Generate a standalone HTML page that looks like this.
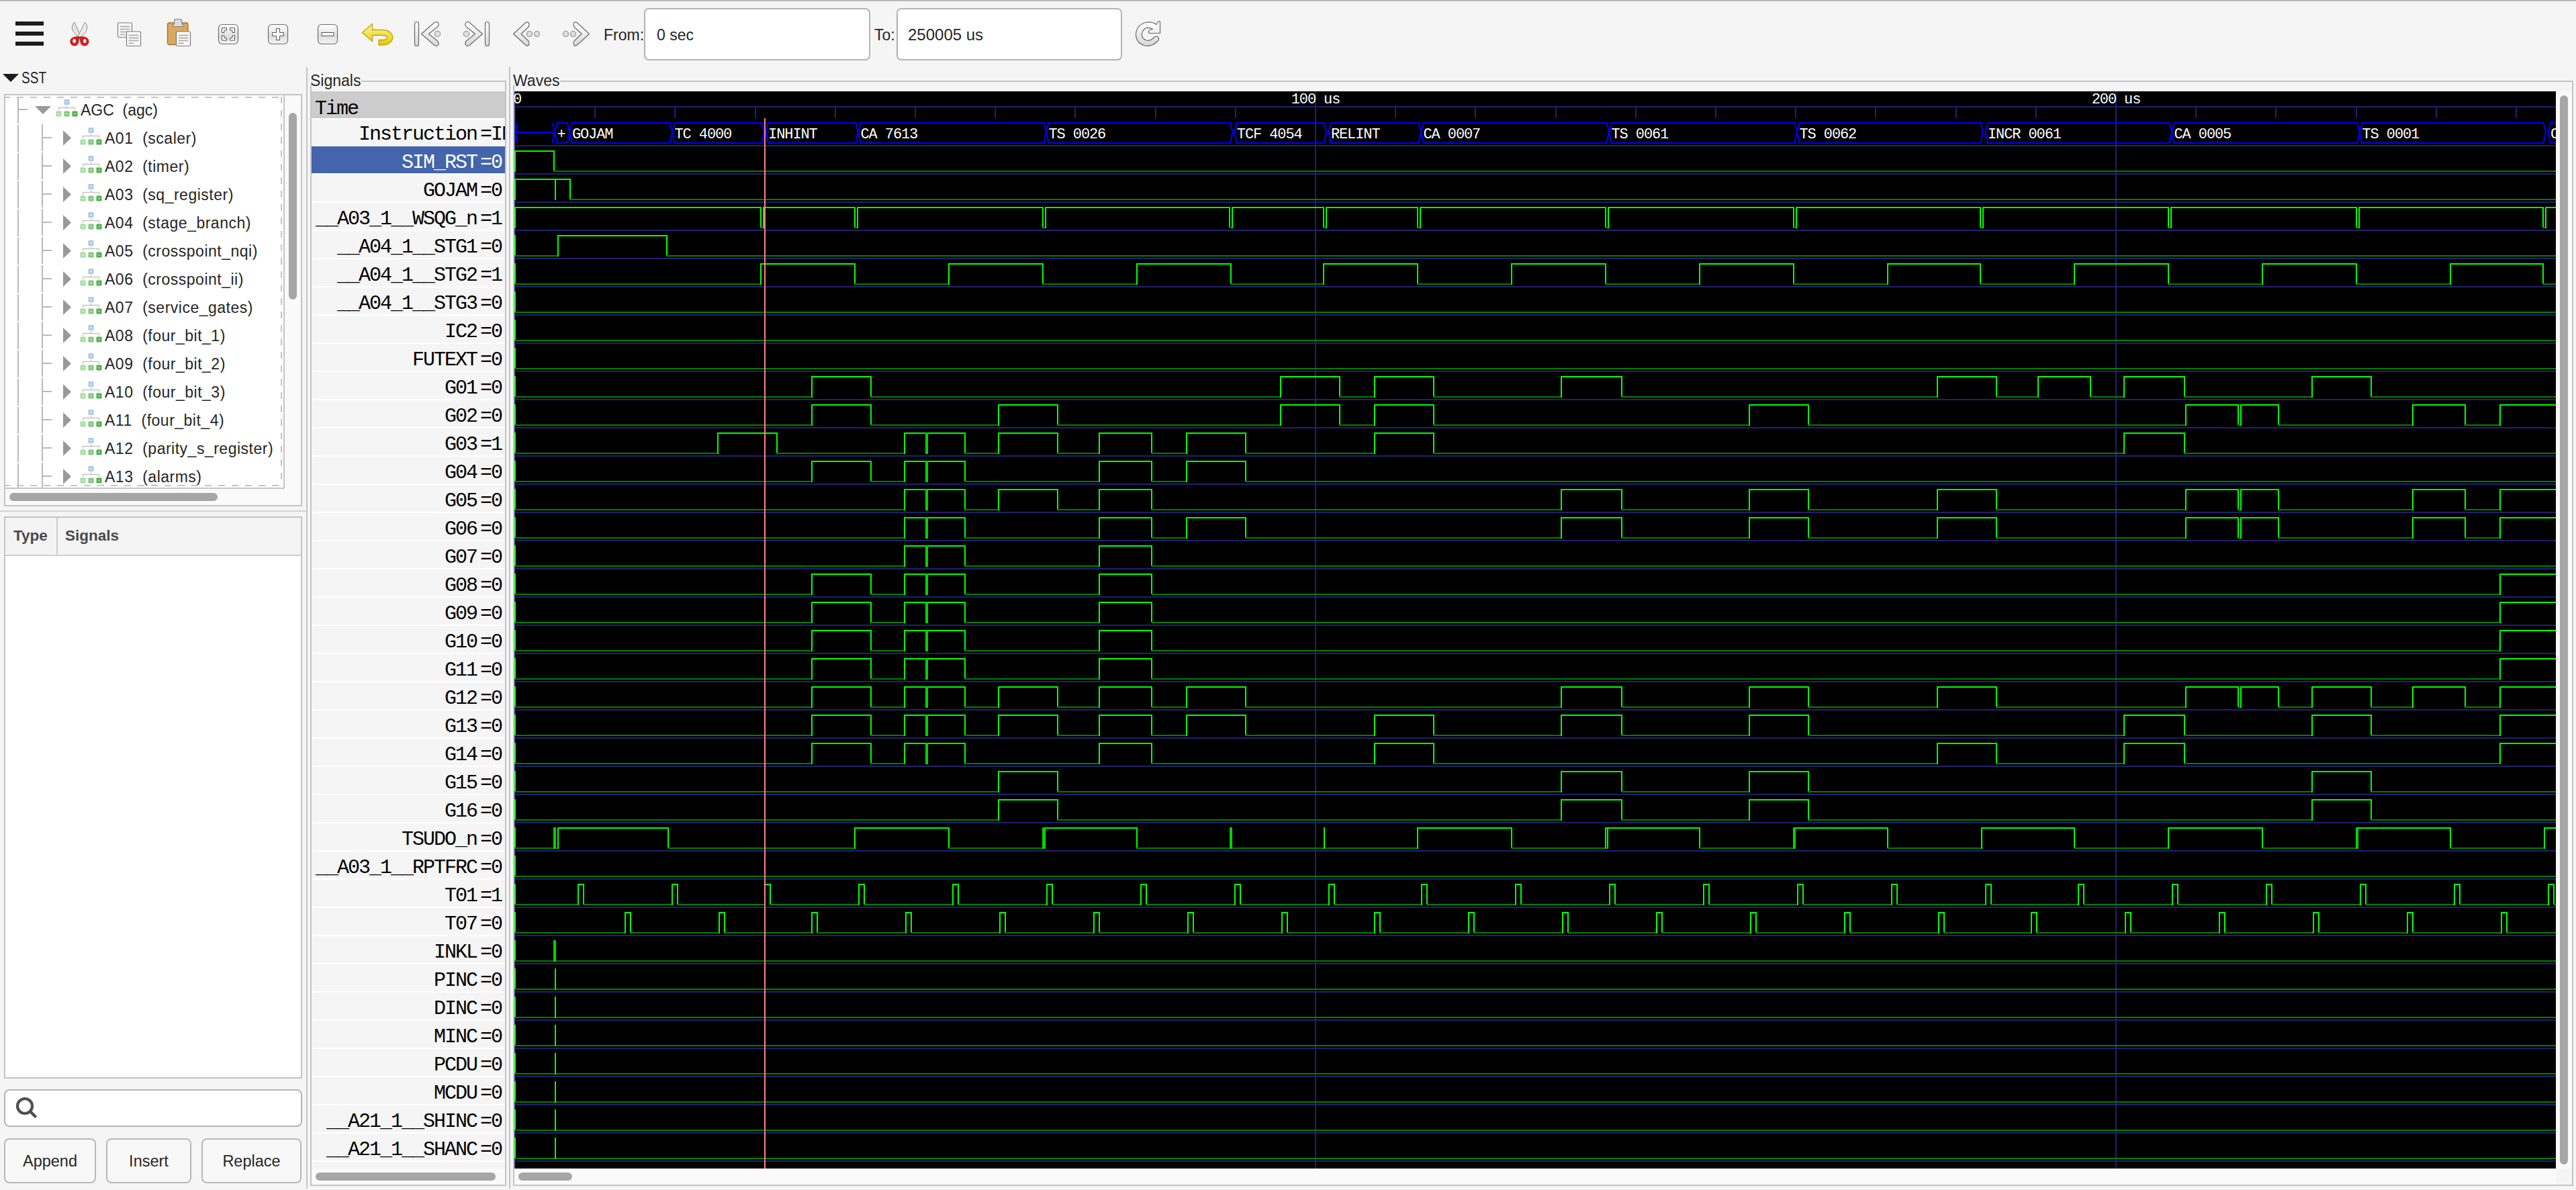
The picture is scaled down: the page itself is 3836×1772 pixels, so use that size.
<!DOCTYPE html><html><head><meta charset="utf-8"><title>GTKWave</title><style>html,body{margin:0;padding:0;width:3836px;height:1772px;overflow:hidden;background:#f5f5f5;}body{position:relative;font-family:"Liberation Sans", sans-serif;}</style></head><body><svg width="3836" height="1772" viewBox="0 0 3836 1772" style="position:absolute;left:0;top:0;display:block">
<rect x="0" y="0" width="3836" height="1772" fill="#f5f5f5"/>
<rect x="0" y="0" width="3836" height="2" fill="#bababa"/>
<rect x="0" y="2" width="3836" height="1" fill="#f8f8f8"/>
<g id="toolbar">
<rect x="23" y="32" width="42" height="6" fill="#1c1c1c"/>
<rect x="23" y="47" width="42" height="6" fill="#1c1c1c"/>
<rect x="23" y="62" width="42" height="6" fill="#1c1c1c"/>
<g><path d="M110.5,33 C106.5,38.5 106.5,43.5 109.5,47.5 L117.5,56.5 L120.5,53.5 Z" fill="#e4e4e2" stroke="#8a8a8a" stroke-width="1" stroke-linejoin="round"/><path d="M126.5,33 C130.5,38.5 130.5,43.5 127.5,47.5 L119.5,56.5 L116.5,53.5 Z" fill="#ececea" stroke="#8a8a8a" stroke-width="1" stroke-linejoin="round"/><path d="M118.3,55 C114,54.2 104.8,54.8 104.8,61.5 C104.8,66 107.5,68 111,68 C114.5,68 117,65.5 117,61 Z M110.6,57.5 A2.9,3.5 0 1,0 110.6,64.5 A2.9,3.5 0 1,0 110.6,57.5 Z" fill="#e21a20" fill-rule="evenodd" stroke="#a80a10" stroke-width="0.8"/><path d="M118.5,55 C122.8,54.2 132,54.8 132,61.5 C132,66 129.3,68 125.8,68 C122.3,68 119.8,65.5 119.8,61 Z M126.2,57.5 A2.9,3.5 0 1,0 126.2,64.5 A2.9,3.5 0 1,0 126.2,57.5 Z" fill="#e21a20" fill-rule="evenodd" stroke="#a80a10" stroke-width="0.8"/></g>
<g><rect x="175.5" y="34" width="21" height="21.5" rx="1.5" fill="#fbfbfb" stroke="#7a7a7a" stroke-width="1.2"/><rect x="178.5" y="38.5" width="15.0" height="2" fill="#b4b4b4"/><rect x="178.5" y="42.5" width="15.0" height="2" fill="#b4b4b4"/><rect x="178.5" y="46.5" width="15.0" height="2" fill="#b4b4b4"/><rect x="178.5" y="50.5" width="8.2" height="2" fill="#b4b4b4"/><rect x="188.5" y="47" width="21" height="21.5" rx="1.5" fill="#fbfbfb" stroke="#7a7a7a" stroke-width="1.2"/><rect x="191.5" y="51.5" width="15.0" height="2" fill="#b4b4b4"/><rect x="191.5" y="55.5" width="15.0" height="2" fill="#b4b4b4"/><rect x="191.5" y="59.5" width="15.0" height="2" fill="#b4b4b4"/><rect x="191.5" y="63.5" width="8.2" height="2" fill="#b4b4b4"/></g>
<g><rect x="249.5" y="34" width="30.5" height="32.5" rx="2.5" fill="#d9a95e" stroke="#a8722a" stroke-width="1.3"/><path d="M259.5,36 L259.5,31 Q259.5,28.5 262,28.5 L268.5,28.5 Q271,28.5 271,31 L271,36 L273.5,37.5 Q274.5,39.5 272,39.5 L258.5,39.5 Q256,39.5 257,37.5 Z" fill="#dcdcdc" stroke="#7d7d7d" stroke-width="1.1" stroke-linejoin="round"/><rect x="262.5" y="47" width="21" height="21.5" rx="1.5" fill="#fbfbfb" stroke="#7a7a7a" stroke-width="1.2"/><rect x="265.5" y="51.5" width="15.0" height="2" fill="#b4b4b4"/><rect x="265.5" y="55.5" width="15.0" height="2" fill="#b4b4b4"/><rect x="265.5" y="59.5" width="15.0" height="2" fill="#b4b4b4"/><rect x="265.5" y="63.5" width="8.2" height="2" fill="#b4b4b4"/></g>
<defs><linearGradient id="zg" x1="0" y1="0" x2="0" y2="1"><stop offset="0" stop-color="#ffffff"/><stop offset="0.6" stop-color="#dedede"/><stop offset="1" stop-color="#f4f4f4"/></linearGradient><linearGradient id="ug" x1="0" y1="0" x2="0" y2="1"><stop offset="0" stop-color="#fff5a0"/><stop offset="1" stop-color="#e8c800"/></linearGradient><linearGradient id="gg" x1="0" y1="0" x2="0" y2="1"><stop offset="0" stop-color="#ffffff"/><stop offset="1" stop-color="#d8d8d8"/></linearGradient></defs>
<rect x="325.5" y="36.5" width="29" height="29" rx="5.5" fill="url(#zg)" stroke="#6e6e6e" stroke-width="1.2"/>
<path d="M330.5,48.5 V41.5 H337.5 V45 H334 V48.5 Z M349.5,48.5 V41.5 H342.5 V45 H346 V48.5 Z M330.5,53 V60 H337.5 V56.5 H334 V53 Z M349.5,53 V60 H342.5 V56.5 H346 V53 Z" fill="#fff" stroke="#555" stroke-width="1"/>
<rect x="399.5" y="36.5" width="29" height="29" rx="5.5" fill="url(#zg)" stroke="#6e6e6e" stroke-width="1.2"/>
<path d="M411.5,42.5 H416.5 V48.5 H422.5 V53.5 H416.5 V59.5 H411.5 V53.5 H405.5 V48.5 H411.5 Z" fill="#fff" stroke="#555" stroke-width="1"/>
<rect x="473.5" y="36.5" width="29" height="29" rx="5.5" fill="url(#zg)" stroke="#6e6e6e" stroke-width="1.2"/>
<rect x="479" y="48.5" width="18" height="5" fill="#fff" stroke="#555" stroke-width="1"/>
<path d="M539.5,48.5 L554.5,35.5 L554.5,44.5 L569,44.5 C590,44.5 590,67 569,67 L564,67 L564,59.5 L569,59.5 C579,59.5 579,52.5 569,52.5 L554.5,52.5 L554.5,61.5 Z" fill="url(#ug)" stroke="#c4a200" stroke-width="1.3" stroke-linejoin="round"/>
<rect x="617.5" y="32.5" width="6" height="36" rx="3" fill="url(#gg)" stroke="#6a6a6a" stroke-width="1.2"/>
<path d="M627.5,50.5 L647,33.5 Q651,31 653,35 Q654,38 651,40.5 L638.5,50.5 L651,60.5 Q654,63 653,66 Q651,70 647,67.5 Z" fill="url(#gg)" stroke="#6a6a6a" stroke-width="1.2" stroke-linejoin="round"/>
<circle cx="651.5" cy="50.5" r="4.2" fill="#dedede" stroke="#8c8c8c" stroke-width="1.1"/>
<rect x="722.5" y="32.5" width="6" height="36" rx="3" fill="url(#gg)" stroke="#6a6a6a" stroke-width="1.2"/>
<path d="M718.5,50.5 L699,33.5 Q695,31 693,35 Q692,38 695,40.5 L707.5,50.5 L695,60.5 Q692,63 693,66 Q695,70 699,67.5 Z" fill="url(#gg)" stroke="#6a6a6a" stroke-width="1.2" stroke-linejoin="round"/>
<circle cx="694.5" cy="50.5" r="4.2" fill="#dedede" stroke="#8c8c8c" stroke-width="1.1"/>
<path d="M764.5,50.5 L782.5,34 Q786.5,31 788,35.5 Q788.5,38.5 786,41 L776,50.5 L786,60 Q788.5,62.5 788,65.5 Q786.5,70 782.5,67 Z" fill="url(#gg)" stroke="#6a6a6a" stroke-width="1.2" stroke-linejoin="round"/>
<circle cx="788.5" cy="50.5" r="4" fill="#dedede" stroke="#8c8c8c" stroke-width="1.1"/>
<circle cx="799.5" cy="50.5" r="4" fill="#dedede" stroke="#8c8c8c" stroke-width="1.1"/>
<path d="M877.5,50.5 L859.5,34 Q855.5,31 854,35.5 Q853.5,38.5 856,41 L866,50.5 L856,60 Q853.5,62.5 854,65.5 Q855.5,70 859.5,67 Z" fill="url(#gg)" stroke="#6a6a6a" stroke-width="1.2" stroke-linejoin="round"/>
<circle cx="842.5" cy="50.5" r="4" fill="#dedede" stroke="#8c8c8c" stroke-width="1.1"/>
<circle cx="853.5" cy="50.5" r="4" fill="#dedede" stroke="#8c8c8c" stroke-width="1.1"/>
<path d="M1727.5,32.5 L1727.5,49.5 L1711,49.5 Q1709,47 1712,45 L1716.5,43 Q1706,38.5 1702,46 Q1697,56 1707,60 Q1713,62 1719,55 Q1722,53 1725,55.5 Q1726.5,58 1724.5,60.5 Q1716,70 1705,68 Q1691,64 1691.5,50 Q1693,37 1706,33.5 Q1715,31.5 1722,36.5 L1724,33 Q1725.5,31 1727.5,32.5 Z" fill="url(#gg)" stroke="#6a6a6a" stroke-width="1.2" stroke-linejoin="round"/>
</g>
<text x="899" y="60" font-family='"Liberation Sans", sans-serif' font-size="23" fill="#262626">From:</text>
<rect x="960" y="13" width="335" height="76" rx="6" fill="#ffffff" stroke="#b3b3b3" stroke-width="2"/>
<text x="978" y="60" font-family='"Liberation Sans", sans-serif' font-size="23" fill="#262626">0 sec</text>
<text x="1302" y="60" font-family='"Liberation Sans", sans-serif' font-size="23" fill="#262626">To:</text>
<rect x="1336" y="13" width="334" height="76" rx="6" fill="#ffffff" stroke="#b3b3b3" stroke-width="2"/>
<text x="1352" y="60" font-family='"Liberation Sans", sans-serif' font-size="24" fill="#262626">250005 us</text>
<path d="M4,110 L28,110 L16,122 Z" fill="#1c1c1c"/>
<text x="32" y="124" font-family='"Liberation Sans", sans-serif' font-size="23" fill="#262626" textLength="37" lengthAdjust="spacingAndGlyphs">SST</text>
<rect x="6" y="140" width="444" height="614" fill="#c4c4c4"/>
<rect x="8" y="142" width="440" height="610" fill="#fafafa"/>
<rect x="8" y="142" width="414" height="584" fill="#ffffff"/>
<rect x="422" y="142" width="2" height="586" fill="#c4c4c4"/>
<rect x="8" y="726" width="416" height="2" fill="#c4c4c4"/>
<rect x="26" y="144" width="2" height="40" fill="#b8b8b8"/>
<rect x="26" y="186" width="2" height="40" fill="#b8b8b8"/>
<rect x="26" y="228" width="2" height="40" fill="#b8b8b8"/>
<rect x="26" y="270" width="2" height="40" fill="#b8b8b8"/>
<rect x="26" y="312" width="2" height="40" fill="#b8b8b8"/>
<rect x="26" y="354" width="2" height="40" fill="#b8b8b8"/>
<rect x="26" y="396" width="2" height="40" fill="#b8b8b8"/>
<rect x="26" y="438" width="2" height="40" fill="#b8b8b8"/>
<rect x="26" y="480" width="2" height="40" fill="#b8b8b8"/>
<rect x="26" y="522" width="2" height="40" fill="#b8b8b8"/>
<rect x="26" y="564" width="2" height="40" fill="#b8b8b8"/>
<rect x="26" y="606" width="2" height="40" fill="#b8b8b8"/>
<rect x="26" y="648" width="2" height="40" fill="#b8b8b8"/>
<rect x="26" y="690" width="2" height="40" fill="#b8b8b8"/>
<rect x="27" y="162" width="14" height="2" fill="#b8b8b8"/>
<rect x="62" y="185" width="2" height="40" fill="#b8b8b8"/>
<rect x="63" y="204" width="14" height="2" fill="#b8b8b8"/>
<rect x="62" y="227" width="2" height="40" fill="#b8b8b8"/>
<rect x="63" y="246" width="14" height="2" fill="#b8b8b8"/>
<rect x="62" y="269" width="2" height="40" fill="#b8b8b8"/>
<rect x="63" y="288" width="14" height="2" fill="#b8b8b8"/>
<rect x="62" y="311" width="2" height="40" fill="#b8b8b8"/>
<rect x="63" y="330" width="14" height="2" fill="#b8b8b8"/>
<rect x="62" y="353" width="2" height="40" fill="#b8b8b8"/>
<rect x="63" y="372" width="14" height="2" fill="#b8b8b8"/>
<rect x="62" y="395" width="2" height="40" fill="#b8b8b8"/>
<rect x="63" y="414" width="14" height="2" fill="#b8b8b8"/>
<rect x="62" y="437" width="2" height="40" fill="#b8b8b8"/>
<rect x="63" y="456" width="14" height="2" fill="#b8b8b8"/>
<rect x="62" y="479" width="2" height="40" fill="#b8b8b8"/>
<rect x="63" y="498" width="14" height="2" fill="#b8b8b8"/>
<rect x="62" y="521" width="2" height="40" fill="#b8b8b8"/>
<rect x="63" y="540" width="14" height="2" fill="#b8b8b8"/>
<rect x="62" y="563" width="2" height="40" fill="#b8b8b8"/>
<rect x="63" y="582" width="14" height="2" fill="#b8b8b8"/>
<rect x="62" y="605" width="2" height="40" fill="#b8b8b8"/>
<rect x="63" y="624" width="14" height="2" fill="#b8b8b8"/>
<rect x="62" y="647" width="2" height="40" fill="#b8b8b8"/>
<rect x="63" y="666" width="14" height="2" fill="#b8b8b8"/>
<rect x="62" y="689" width="2" height="40" fill="#b8b8b8"/>
<rect x="63" y="708" width="14" height="2" fill="#b8b8b8"/>
<path d="M52,158 L76,158 L64,170 Z" fill="#999999"/>
<rect x="95.5" y="148" width="8" height="8" fill="#a9c8ee" rx="1"/><rect x="98" y="150.5" width="3" height="3" fill="#d4e2f6"/><path d="M87.5,164.5 V160.5 H111.5 V164.5 M99.5,157 V160.5" fill="none" stroke="#c4c4c4" stroke-width="1.3"/><rect x="83.5" y="165.5" width="8" height="8" fill="#a8dca0" rx="1"/><rect x="86.0" y="168" width="3" height="3" fill="#cdeac8"/><rect x="95.5" y="165.5" width="8" height="8" fill="#7dca78" rx="1"/><rect x="98.0" y="168" width="3" height="3" fill="#a6dca2"/><rect x="107.5" y="165.5" width="8" height="8" fill="#4fb04c" rx="1"/><rect x="110.0" y="168" width="3" height="3" fill="#86cc83"/>
<text x="120" y="172" font-family='"Liberation Sans", sans-serif' font-size="23" fill="#262626" xml:space="preserve">AGC  (agc)</text>
<path d="M94,194 L94,217 L106,205.5 Z" fill="#999999"/>
<rect x="131.5" y="190" width="8" height="8" fill="#a9c8ee" rx="1"/><rect x="134" y="192.5" width="3" height="3" fill="#d4e2f6"/><path d="M123.5,206.5 V202.5 H147.5 V206.5 M135.5,199 V202.5" fill="none" stroke="#c4c4c4" stroke-width="1.3"/><rect x="119.5" y="207.5" width="8" height="8" fill="#a8dca0" rx="1"/><rect x="122.0" y="210" width="3" height="3" fill="#cdeac8"/><rect x="131.5" y="207.5" width="8" height="8" fill="#7dca78" rx="1"/><rect x="134.0" y="210" width="3" height="3" fill="#a6dca2"/><rect x="143.5" y="207.5" width="8" height="8" fill="#4fb04c" rx="1"/><rect x="146.0" y="210" width="3" height="3" fill="#86cc83"/>
<text x="156" y="214" font-family='"Liberation Sans", sans-serif' font-size="23" letter-spacing="0.5" fill="#262626" xml:space="preserve">A01  (scaler)</text>
<path d="M94,236 L94,259 L106,247.5 Z" fill="#999999"/>
<rect x="131.5" y="232" width="8" height="8" fill="#a9c8ee" rx="1"/><rect x="134" y="234.5" width="3" height="3" fill="#d4e2f6"/><path d="M123.5,248.5 V244.5 H147.5 V248.5 M135.5,241 V244.5" fill="none" stroke="#c4c4c4" stroke-width="1.3"/><rect x="119.5" y="249.5" width="8" height="8" fill="#a8dca0" rx="1"/><rect x="122.0" y="252" width="3" height="3" fill="#cdeac8"/><rect x="131.5" y="249.5" width="8" height="8" fill="#7dca78" rx="1"/><rect x="134.0" y="252" width="3" height="3" fill="#a6dca2"/><rect x="143.5" y="249.5" width="8" height="8" fill="#4fb04c" rx="1"/><rect x="146.0" y="252" width="3" height="3" fill="#86cc83"/>
<text x="156" y="256" font-family='"Liberation Sans", sans-serif' font-size="23" letter-spacing="0.5" fill="#262626" xml:space="preserve">A02  (timer)</text>
<path d="M94,278 L94,301 L106,289.5 Z" fill="#999999"/>
<rect x="131.5" y="274" width="8" height="8" fill="#a9c8ee" rx="1"/><rect x="134" y="276.5" width="3" height="3" fill="#d4e2f6"/><path d="M123.5,290.5 V286.5 H147.5 V290.5 M135.5,283 V286.5" fill="none" stroke="#c4c4c4" stroke-width="1.3"/><rect x="119.5" y="291.5" width="8" height="8" fill="#a8dca0" rx="1"/><rect x="122.0" y="294" width="3" height="3" fill="#cdeac8"/><rect x="131.5" y="291.5" width="8" height="8" fill="#7dca78" rx="1"/><rect x="134.0" y="294" width="3" height="3" fill="#a6dca2"/><rect x="143.5" y="291.5" width="8" height="8" fill="#4fb04c" rx="1"/><rect x="146.0" y="294" width="3" height="3" fill="#86cc83"/>
<text x="156" y="298" font-family='"Liberation Sans", sans-serif' font-size="23" letter-spacing="0.5" fill="#262626" xml:space="preserve">A03  (sq_register)</text>
<path d="M94,320 L94,343 L106,331.5 Z" fill="#999999"/>
<rect x="131.5" y="316" width="8" height="8" fill="#a9c8ee" rx="1"/><rect x="134" y="318.5" width="3" height="3" fill="#d4e2f6"/><path d="M123.5,332.5 V328.5 H147.5 V332.5 M135.5,325 V328.5" fill="none" stroke="#c4c4c4" stroke-width="1.3"/><rect x="119.5" y="333.5" width="8" height="8" fill="#a8dca0" rx="1"/><rect x="122.0" y="336" width="3" height="3" fill="#cdeac8"/><rect x="131.5" y="333.5" width="8" height="8" fill="#7dca78" rx="1"/><rect x="134.0" y="336" width="3" height="3" fill="#a6dca2"/><rect x="143.5" y="333.5" width="8" height="8" fill="#4fb04c" rx="1"/><rect x="146.0" y="336" width="3" height="3" fill="#86cc83"/>
<text x="156" y="340" font-family='"Liberation Sans", sans-serif' font-size="23" letter-spacing="0.5" fill="#262626" xml:space="preserve">A04  (stage_branch)</text>
<path d="M94,362 L94,385 L106,373.5 Z" fill="#999999"/>
<rect x="131.5" y="358" width="8" height="8" fill="#a9c8ee" rx="1"/><rect x="134" y="360.5" width="3" height="3" fill="#d4e2f6"/><path d="M123.5,374.5 V370.5 H147.5 V374.5 M135.5,367 V370.5" fill="none" stroke="#c4c4c4" stroke-width="1.3"/><rect x="119.5" y="375.5" width="8" height="8" fill="#a8dca0" rx="1"/><rect x="122.0" y="378" width="3" height="3" fill="#cdeac8"/><rect x="131.5" y="375.5" width="8" height="8" fill="#7dca78" rx="1"/><rect x="134.0" y="378" width="3" height="3" fill="#a6dca2"/><rect x="143.5" y="375.5" width="8" height="8" fill="#4fb04c" rx="1"/><rect x="146.0" y="378" width="3" height="3" fill="#86cc83"/>
<text x="156" y="382" font-family='"Liberation Sans", sans-serif' font-size="23" letter-spacing="0.5" fill="#262626" xml:space="preserve">A05  (crosspoint_nqi)</text>
<path d="M94,404 L94,427 L106,415.5 Z" fill="#999999"/>
<rect x="131.5" y="400" width="8" height="8" fill="#a9c8ee" rx="1"/><rect x="134" y="402.5" width="3" height="3" fill="#d4e2f6"/><path d="M123.5,416.5 V412.5 H147.5 V416.5 M135.5,409 V412.5" fill="none" stroke="#c4c4c4" stroke-width="1.3"/><rect x="119.5" y="417.5" width="8" height="8" fill="#a8dca0" rx="1"/><rect x="122.0" y="420" width="3" height="3" fill="#cdeac8"/><rect x="131.5" y="417.5" width="8" height="8" fill="#7dca78" rx="1"/><rect x="134.0" y="420" width="3" height="3" fill="#a6dca2"/><rect x="143.5" y="417.5" width="8" height="8" fill="#4fb04c" rx="1"/><rect x="146.0" y="420" width="3" height="3" fill="#86cc83"/>
<text x="156" y="424" font-family='"Liberation Sans", sans-serif' font-size="23" letter-spacing="0.5" fill="#262626" xml:space="preserve">A06  (crosspoint_ii)</text>
<path d="M94,446 L94,469 L106,457.5 Z" fill="#999999"/>
<rect x="131.5" y="442" width="8" height="8" fill="#a9c8ee" rx="1"/><rect x="134" y="444.5" width="3" height="3" fill="#d4e2f6"/><path d="M123.5,458.5 V454.5 H147.5 V458.5 M135.5,451 V454.5" fill="none" stroke="#c4c4c4" stroke-width="1.3"/><rect x="119.5" y="459.5" width="8" height="8" fill="#a8dca0" rx="1"/><rect x="122.0" y="462" width="3" height="3" fill="#cdeac8"/><rect x="131.5" y="459.5" width="8" height="8" fill="#7dca78" rx="1"/><rect x="134.0" y="462" width="3" height="3" fill="#a6dca2"/><rect x="143.5" y="459.5" width="8" height="8" fill="#4fb04c" rx="1"/><rect x="146.0" y="462" width="3" height="3" fill="#86cc83"/>
<text x="156" y="466" font-family='"Liberation Sans", sans-serif' font-size="23" letter-spacing="0.5" fill="#262626" xml:space="preserve">A07  (service_gates)</text>
<path d="M94,488 L94,511 L106,499.5 Z" fill="#999999"/>
<rect x="131.5" y="484" width="8" height="8" fill="#a9c8ee" rx="1"/><rect x="134" y="486.5" width="3" height="3" fill="#d4e2f6"/><path d="M123.5,500.5 V496.5 H147.5 V500.5 M135.5,493 V496.5" fill="none" stroke="#c4c4c4" stroke-width="1.3"/><rect x="119.5" y="501.5" width="8" height="8" fill="#a8dca0" rx="1"/><rect x="122.0" y="504" width="3" height="3" fill="#cdeac8"/><rect x="131.5" y="501.5" width="8" height="8" fill="#7dca78" rx="1"/><rect x="134.0" y="504" width="3" height="3" fill="#a6dca2"/><rect x="143.5" y="501.5" width="8" height="8" fill="#4fb04c" rx="1"/><rect x="146.0" y="504" width="3" height="3" fill="#86cc83"/>
<text x="156" y="508" font-family='"Liberation Sans", sans-serif' font-size="23" letter-spacing="0.5" fill="#262626" xml:space="preserve">A08  (four_bit_1)</text>
<path d="M94,530 L94,553 L106,541.5 Z" fill="#999999"/>
<rect x="131.5" y="526" width="8" height="8" fill="#a9c8ee" rx="1"/><rect x="134" y="528.5" width="3" height="3" fill="#d4e2f6"/><path d="M123.5,542.5 V538.5 H147.5 V542.5 M135.5,535 V538.5" fill="none" stroke="#c4c4c4" stroke-width="1.3"/><rect x="119.5" y="543.5" width="8" height="8" fill="#a8dca0" rx="1"/><rect x="122.0" y="546" width="3" height="3" fill="#cdeac8"/><rect x="131.5" y="543.5" width="8" height="8" fill="#7dca78" rx="1"/><rect x="134.0" y="546" width="3" height="3" fill="#a6dca2"/><rect x="143.5" y="543.5" width="8" height="8" fill="#4fb04c" rx="1"/><rect x="146.0" y="546" width="3" height="3" fill="#86cc83"/>
<text x="156" y="550" font-family='"Liberation Sans", sans-serif' font-size="23" letter-spacing="0.5" fill="#262626" xml:space="preserve">A09  (four_bit_2)</text>
<path d="M94,572 L94,595 L106,583.5 Z" fill="#999999"/>
<rect x="131.5" y="568" width="8" height="8" fill="#a9c8ee" rx="1"/><rect x="134" y="570.5" width="3" height="3" fill="#d4e2f6"/><path d="M123.5,584.5 V580.5 H147.5 V584.5 M135.5,577 V580.5" fill="none" stroke="#c4c4c4" stroke-width="1.3"/><rect x="119.5" y="585.5" width="8" height="8" fill="#a8dca0" rx="1"/><rect x="122.0" y="588" width="3" height="3" fill="#cdeac8"/><rect x="131.5" y="585.5" width="8" height="8" fill="#7dca78" rx="1"/><rect x="134.0" y="588" width="3" height="3" fill="#a6dca2"/><rect x="143.5" y="585.5" width="8" height="8" fill="#4fb04c" rx="1"/><rect x="146.0" y="588" width="3" height="3" fill="#86cc83"/>
<text x="156" y="592" font-family='"Liberation Sans", sans-serif' font-size="23" letter-spacing="0.5" fill="#262626" xml:space="preserve">A10  (four_bit_3)</text>
<path d="M94,614 L94,637 L106,625.5 Z" fill="#999999"/>
<rect x="131.5" y="610" width="8" height="8" fill="#a9c8ee" rx="1"/><rect x="134" y="612.5" width="3" height="3" fill="#d4e2f6"/><path d="M123.5,626.5 V622.5 H147.5 V626.5 M135.5,619 V622.5" fill="none" stroke="#c4c4c4" stroke-width="1.3"/><rect x="119.5" y="627.5" width="8" height="8" fill="#a8dca0" rx="1"/><rect x="122.0" y="630" width="3" height="3" fill="#cdeac8"/><rect x="131.5" y="627.5" width="8" height="8" fill="#7dca78" rx="1"/><rect x="134.0" y="630" width="3" height="3" fill="#a6dca2"/><rect x="143.5" y="627.5" width="8" height="8" fill="#4fb04c" rx="1"/><rect x="146.0" y="630" width="3" height="3" fill="#86cc83"/>
<text x="156" y="634" font-family='"Liberation Sans", sans-serif' font-size="23" letter-spacing="0.5" fill="#262626" xml:space="preserve">A11  (four_bit_4)</text>
<path d="M94,656 L94,679 L106,667.5 Z" fill="#999999"/>
<rect x="131.5" y="652" width="8" height="8" fill="#a9c8ee" rx="1"/><rect x="134" y="654.5" width="3" height="3" fill="#d4e2f6"/><path d="M123.5,668.5 V664.5 H147.5 V668.5 M135.5,661 V664.5" fill="none" stroke="#c4c4c4" stroke-width="1.3"/><rect x="119.5" y="669.5" width="8" height="8" fill="#a8dca0" rx="1"/><rect x="122.0" y="672" width="3" height="3" fill="#cdeac8"/><rect x="131.5" y="669.5" width="8" height="8" fill="#7dca78" rx="1"/><rect x="134.0" y="672" width="3" height="3" fill="#a6dca2"/><rect x="143.5" y="669.5" width="8" height="8" fill="#4fb04c" rx="1"/><rect x="146.0" y="672" width="3" height="3" fill="#86cc83"/>
<text x="156" y="676" font-family='"Liberation Sans", sans-serif' font-size="23" letter-spacing="0.5" fill="#262626" xml:space="preserve">A12  (parity_s_register)</text>
<path d="M94,698 L94,721 L106,709.5 Z" fill="#999999"/>
<rect x="131.5" y="694" width="8" height="8" fill="#a9c8ee" rx="1"/><rect x="134" y="696.5" width="3" height="3" fill="#d4e2f6"/><path d="M123.5,710.5 V706.5 H147.5 V710.5 M135.5,703 V706.5" fill="none" stroke="#c4c4c4" stroke-width="1.3"/><rect x="119.5" y="711.5" width="8" height="8" fill="#a8dca0" rx="1"/><rect x="122.0" y="714" width="3" height="3" fill="#cdeac8"/><rect x="131.5" y="711.5" width="8" height="8" fill="#7dca78" rx="1"/><rect x="134.0" y="714" width="3" height="3" fill="#a6dca2"/><rect x="143.5" y="711.5" width="8" height="8" fill="#4fb04c" rx="1"/><rect x="146.0" y="714" width="3" height="3" fill="#86cc83"/>
<text x="156" y="718" font-family='"Liberation Sans", sans-serif' font-size="23" letter-spacing="0.5" fill="#262626" xml:space="preserve">A13  (alarms)</text>
<rect x="8" y="728" width="440" height="24" fill="#fafafa"/>
<rect x="8" y="726" width="416" height="2" fill="#c4c4c4"/>
<path d="M8,145 H420 M8,723 H420" fill="none" stroke="#c4c4c4" stroke-width="2" stroke-dasharray="10,10" stroke-dashoffset="3"/>
<path d="M419,144 V724" fill="none" stroke="#c4c4c4" stroke-width="2" stroke-dasharray="10,10"/>
<rect x="430" y="168" width="12" height="278" rx="6" fill="#a6a6a6"/>
<rect x="14" y="734" width="310" height="12" rx="6" fill="#a6a6a6"/>
<rect x="0" y="760" width="456" height="2" fill="#d4d4d4"/>
<rect x="6" y="769" width="444" height="837" fill="#c4c4c4"/>
<rect x="8" y="771" width="440" height="833" fill="#ffffff"/>
<rect x="8" y="771" width="440" height="56" fill="#f4f4f4"/>
<rect x="8" y="826" width="440" height="2" fill="#cfcfcf"/>
<rect x="84" y="771" width="2" height="56" fill="#cfcfcf"/>
<text x="20" y="805" font-family='"Liberation Sans", sans-serif' font-size="22.5" font-weight="bold" fill="#4a4a4a">Type</text>
<text x="97" y="805" font-family='"Liberation Sans", sans-serif' font-size="22.5" font-weight="bold" fill="#4a4a4a">Signals</text>
<rect x="7" y="1623" width="442" height="54" rx="7" fill="#ffffff" stroke="#b4b4b4" stroke-width="2"/>
<circle cx="37" cy="1647" r="11" fill="none" stroke="#4e4e4e" stroke-width="4.2"/>
<path d="M45.5,1655.5 L52.5,1662.5" stroke="#4e4e4e" stroke-width="4.4" stroke-linecap="round"/>
<rect x="7" y="1696" width="135" height="65" rx="7" fill="#f8f8f8" stroke="#b8b8b8" stroke-width="2"/>
<text x="74.5" y="1737" text-anchor="middle" font-family='"Liberation Sans", sans-serif' font-size="23.5" fill="#262626">Append</text>
<rect x="159" y="1696" width="125" height="65" rx="7" fill="#f8f8f8" stroke="#b8b8b8" stroke-width="2"/>
<text x="221.5" y="1737" text-anchor="middle" font-family='"Liberation Sans", sans-serif' font-size="23.5" fill="#262626">Insert</text>
<rect x="301" y="1696" width="147" height="65" rx="7" fill="#f8f8f8" stroke="#b8b8b8" stroke-width="2"/>
<text x="374.5" y="1737" text-anchor="middle" font-family='"Liberation Sans", sans-serif' font-size="23.5" fill="#262626">Replace</text>
<rect x="456" y="100" width="2" height="1670" fill="#c4c4c4"/>
<rect x="758" y="100" width="2" height="1670" fill="#c4c4c4"/>
<text x="462" y="128" font-family='"Liberation Sans", sans-serif' font-size="23" fill="#262626">Signals</text>
<rect x="538" y="120" width="216" height="2" fill="#c4c4c4"/>
<rect x="462" y="126" width="2" height="1640" fill="#c4c4c4"/>
<rect x="752" y="120" width="2" height="1646" fill="#c4c4c4"/>
<rect x="462" y="1764" width="292" height="2" fill="#c4c4c4"/>
<rect x="464" y="136" width="288" height="1604" fill="#ffffff"/>
<defs><clipPath id="sclip"><rect x="464" y="136" width="288" height="1604"/></clipPath></defs>
<g clip-path="url(#sclip)">
<rect x="464" y="136" width="288" height="40" fill="#cccccc"/>
<text x="469" y="170" font-family='"Liberation Mono", monospace' font-size="30" letter-spacing="-2" fill="#000">Time</text>
<rect x="464" y="178" width="288" height="38" fill="#f5f5f5"/>
<text x="710" y="208" text-anchor="end" font-family='"Liberation Mono", monospace' font-size="30" letter-spacing="-2" fill="#000000">Instruction</text>
<text x="715" y="208" font-family='"Liberation Mono", monospace' font-size="30" letter-spacing="-2" fill="#000000">=INHINT</text>
<rect x="464" y="218" width="288" height="40" fill="#4465ab"/>
<rect x="464" y="218" width="288" height="1" fill="#3858a6"/>
<text x="710" y="250" text-anchor="end" font-family='"Liberation Mono", monospace' font-size="30" letter-spacing="-2" fill="#ffffff">SIM_RST</text>
<text x="715" y="250" font-family='"Liberation Mono", monospace' font-size="30" letter-spacing="-2" fill="#ffffff">=0</text>
<rect x="464" y="260" width="288" height="40" fill="#f5f5f5"/>
<text x="710" y="292" text-anchor="end" font-family='"Liberation Mono", monospace' font-size="30" letter-spacing="-2" fill="#000000">GOJAM</text>
<text x="715" y="292" font-family='"Liberation Mono", monospace' font-size="30" letter-spacing="-2" fill="#000000">=0</text>
<rect x="464" y="302" width="288" height="40" fill="#f5f5f5"/>
<text x="710" y="334" text-anchor="end" font-family='"Liberation Mono", monospace' font-size="30" letter-spacing="-2" fill="#000000">__A03_1__WSQG_n</text>
<text x="715" y="334" font-family='"Liberation Mono", monospace' font-size="30" letter-spacing="-2" fill="#000000">=1</text>
<rect x="464" y="344" width="288" height="40" fill="#f5f5f5"/>
<text x="710" y="376" text-anchor="end" font-family='"Liberation Mono", monospace' font-size="30" letter-spacing="-2" fill="#000000">__A04_1__STG1</text>
<text x="715" y="376" font-family='"Liberation Mono", monospace' font-size="30" letter-spacing="-2" fill="#000000">=0</text>
<rect x="464" y="386" width="288" height="40" fill="#f5f5f5"/>
<text x="710" y="418" text-anchor="end" font-family='"Liberation Mono", monospace' font-size="30" letter-spacing="-2" fill="#000000">__A04_1__STG2</text>
<text x="715" y="418" font-family='"Liberation Mono", monospace' font-size="30" letter-spacing="-2" fill="#000000">=1</text>
<rect x="464" y="428" width="288" height="40" fill="#f5f5f5"/>
<text x="710" y="460" text-anchor="end" font-family='"Liberation Mono", monospace' font-size="30" letter-spacing="-2" fill="#000000">__A04_1__STG3</text>
<text x="715" y="460" font-family='"Liberation Mono", monospace' font-size="30" letter-spacing="-2" fill="#000000">=0</text>
<rect x="464" y="470" width="288" height="40" fill="#f5f5f5"/>
<text x="710" y="502" text-anchor="end" font-family='"Liberation Mono", monospace' font-size="30" letter-spacing="-2" fill="#000000">IC2</text>
<text x="715" y="502" font-family='"Liberation Mono", monospace' font-size="30" letter-spacing="-2" fill="#000000">=0</text>
<rect x="464" y="512" width="288" height="40" fill="#f5f5f5"/>
<text x="710" y="544" text-anchor="end" font-family='"Liberation Mono", monospace' font-size="30" letter-spacing="-2" fill="#000000">FUTEXT</text>
<text x="715" y="544" font-family='"Liberation Mono", monospace' font-size="30" letter-spacing="-2" fill="#000000">=0</text>
<rect x="464" y="554" width="288" height="40" fill="#f5f5f5"/>
<text x="710" y="586" text-anchor="end" font-family='"Liberation Mono", monospace' font-size="30" letter-spacing="-2" fill="#000000">G01</text>
<text x="715" y="586" font-family='"Liberation Mono", monospace' font-size="30" letter-spacing="-2" fill="#000000">=0</text>
<rect x="464" y="596" width="288" height="40" fill="#f5f5f5"/>
<text x="710" y="628" text-anchor="end" font-family='"Liberation Mono", monospace' font-size="30" letter-spacing="-2" fill="#000000">G02</text>
<text x="715" y="628" font-family='"Liberation Mono", monospace' font-size="30" letter-spacing="-2" fill="#000000">=0</text>
<rect x="464" y="638" width="288" height="40" fill="#f5f5f5"/>
<text x="710" y="670" text-anchor="end" font-family='"Liberation Mono", monospace' font-size="30" letter-spacing="-2" fill="#000000">G03</text>
<text x="715" y="670" font-family='"Liberation Mono", monospace' font-size="30" letter-spacing="-2" fill="#000000">=1</text>
<rect x="464" y="680" width="288" height="40" fill="#f5f5f5"/>
<text x="710" y="712" text-anchor="end" font-family='"Liberation Mono", monospace' font-size="30" letter-spacing="-2" fill="#000000">G04</text>
<text x="715" y="712" font-family='"Liberation Mono", monospace' font-size="30" letter-spacing="-2" fill="#000000">=0</text>
<rect x="464" y="722" width="288" height="40" fill="#f5f5f5"/>
<text x="710" y="754" text-anchor="end" font-family='"Liberation Mono", monospace' font-size="30" letter-spacing="-2" fill="#000000">G05</text>
<text x="715" y="754" font-family='"Liberation Mono", monospace' font-size="30" letter-spacing="-2" fill="#000000">=0</text>
<rect x="464" y="764" width="288" height="40" fill="#f5f5f5"/>
<text x="710" y="796" text-anchor="end" font-family='"Liberation Mono", monospace' font-size="30" letter-spacing="-2" fill="#000000">G06</text>
<text x="715" y="796" font-family='"Liberation Mono", monospace' font-size="30" letter-spacing="-2" fill="#000000">=0</text>
<rect x="464" y="806" width="288" height="40" fill="#f5f5f5"/>
<text x="710" y="838" text-anchor="end" font-family='"Liberation Mono", monospace' font-size="30" letter-spacing="-2" fill="#000000">G07</text>
<text x="715" y="838" font-family='"Liberation Mono", monospace' font-size="30" letter-spacing="-2" fill="#000000">=0</text>
<rect x="464" y="848" width="288" height="40" fill="#f5f5f5"/>
<text x="710" y="880" text-anchor="end" font-family='"Liberation Mono", monospace' font-size="30" letter-spacing="-2" fill="#000000">G08</text>
<text x="715" y="880" font-family='"Liberation Mono", monospace' font-size="30" letter-spacing="-2" fill="#000000">=0</text>
<rect x="464" y="890" width="288" height="40" fill="#f5f5f5"/>
<text x="710" y="922" text-anchor="end" font-family='"Liberation Mono", monospace' font-size="30" letter-spacing="-2" fill="#000000">G09</text>
<text x="715" y="922" font-family='"Liberation Mono", monospace' font-size="30" letter-spacing="-2" fill="#000000">=0</text>
<rect x="464" y="932" width="288" height="40" fill="#f5f5f5"/>
<text x="710" y="964" text-anchor="end" font-family='"Liberation Mono", monospace' font-size="30" letter-spacing="-2" fill="#000000">G10</text>
<text x="715" y="964" font-family='"Liberation Mono", monospace' font-size="30" letter-spacing="-2" fill="#000000">=0</text>
<rect x="464" y="974" width="288" height="40" fill="#f5f5f5"/>
<text x="710" y="1006" text-anchor="end" font-family='"Liberation Mono", monospace' font-size="30" letter-spacing="-2" fill="#000000">G11</text>
<text x="715" y="1006" font-family='"Liberation Mono", monospace' font-size="30" letter-spacing="-2" fill="#000000">=0</text>
<rect x="464" y="1016" width="288" height="40" fill="#f5f5f5"/>
<text x="710" y="1048" text-anchor="end" font-family='"Liberation Mono", monospace' font-size="30" letter-spacing="-2" fill="#000000">G12</text>
<text x="715" y="1048" font-family='"Liberation Mono", monospace' font-size="30" letter-spacing="-2" fill="#000000">=0</text>
<rect x="464" y="1058" width="288" height="40" fill="#f5f5f5"/>
<text x="710" y="1090" text-anchor="end" font-family='"Liberation Mono", monospace' font-size="30" letter-spacing="-2" fill="#000000">G13</text>
<text x="715" y="1090" font-family='"Liberation Mono", monospace' font-size="30" letter-spacing="-2" fill="#000000">=0</text>
<rect x="464" y="1100" width="288" height="40" fill="#f5f5f5"/>
<text x="710" y="1132" text-anchor="end" font-family='"Liberation Mono", monospace' font-size="30" letter-spacing="-2" fill="#000000">G14</text>
<text x="715" y="1132" font-family='"Liberation Mono", monospace' font-size="30" letter-spacing="-2" fill="#000000">=0</text>
<rect x="464" y="1142" width="288" height="40" fill="#f5f5f5"/>
<text x="710" y="1174" text-anchor="end" font-family='"Liberation Mono", monospace' font-size="30" letter-spacing="-2" fill="#000000">G15</text>
<text x="715" y="1174" font-family='"Liberation Mono", monospace' font-size="30" letter-spacing="-2" fill="#000000">=0</text>
<rect x="464" y="1184" width="288" height="40" fill="#f5f5f5"/>
<text x="710" y="1216" text-anchor="end" font-family='"Liberation Mono", monospace' font-size="30" letter-spacing="-2" fill="#000000">G16</text>
<text x="715" y="1216" font-family='"Liberation Mono", monospace' font-size="30" letter-spacing="-2" fill="#000000">=0</text>
<rect x="464" y="1226" width="288" height="40" fill="#f5f5f5"/>
<text x="710" y="1258" text-anchor="end" font-family='"Liberation Mono", monospace' font-size="30" letter-spacing="-2" fill="#000000">TSUDO_n</text>
<text x="715" y="1258" font-family='"Liberation Mono", monospace' font-size="30" letter-spacing="-2" fill="#000000">=0</text>
<rect x="464" y="1268" width="288" height="40" fill="#f5f5f5"/>
<text x="710" y="1300" text-anchor="end" font-family='"Liberation Mono", monospace' font-size="30" letter-spacing="-2" fill="#000000">__A03_1__RPTFRC</text>
<text x="715" y="1300" font-family='"Liberation Mono", monospace' font-size="30" letter-spacing="-2" fill="#000000">=0</text>
<rect x="464" y="1310" width="288" height="40" fill="#f5f5f5"/>
<text x="710" y="1342" text-anchor="end" font-family='"Liberation Mono", monospace' font-size="30" letter-spacing="-2" fill="#000000">T01</text>
<text x="715" y="1342" font-family='"Liberation Mono", monospace' font-size="30" letter-spacing="-2" fill="#000000">=1</text>
<rect x="464" y="1352" width="288" height="40" fill="#f5f5f5"/>
<text x="710" y="1384" text-anchor="end" font-family='"Liberation Mono", monospace' font-size="30" letter-spacing="-2" fill="#000000">T07</text>
<text x="715" y="1384" font-family='"Liberation Mono", monospace' font-size="30" letter-spacing="-2" fill="#000000">=0</text>
<rect x="464" y="1394" width="288" height="40" fill="#f5f5f5"/>
<text x="710" y="1426" text-anchor="end" font-family='"Liberation Mono", monospace' font-size="30" letter-spacing="-2" fill="#000000">INKL</text>
<text x="715" y="1426" font-family='"Liberation Mono", monospace' font-size="30" letter-spacing="-2" fill="#000000">=0</text>
<rect x="464" y="1436" width="288" height="40" fill="#f5f5f5"/>
<text x="710" y="1468" text-anchor="end" font-family='"Liberation Mono", monospace' font-size="30" letter-spacing="-2" fill="#000000">PINC</text>
<text x="715" y="1468" font-family='"Liberation Mono", monospace' font-size="30" letter-spacing="-2" fill="#000000">=0</text>
<rect x="464" y="1478" width="288" height="40" fill="#f5f5f5"/>
<text x="710" y="1510" text-anchor="end" font-family='"Liberation Mono", monospace' font-size="30" letter-spacing="-2" fill="#000000">DINC</text>
<text x="715" y="1510" font-family='"Liberation Mono", monospace' font-size="30" letter-spacing="-2" fill="#000000">=0</text>
<rect x="464" y="1520" width="288" height="40" fill="#f5f5f5"/>
<text x="710" y="1552" text-anchor="end" font-family='"Liberation Mono", monospace' font-size="30" letter-spacing="-2" fill="#000000">MINC</text>
<text x="715" y="1552" font-family='"Liberation Mono", monospace' font-size="30" letter-spacing="-2" fill="#000000">=0</text>
<rect x="464" y="1562" width="288" height="40" fill="#f5f5f5"/>
<text x="710" y="1594" text-anchor="end" font-family='"Liberation Mono", monospace' font-size="30" letter-spacing="-2" fill="#000000">PCDU</text>
<text x="715" y="1594" font-family='"Liberation Mono", monospace' font-size="30" letter-spacing="-2" fill="#000000">=0</text>
<rect x="464" y="1604" width="288" height="40" fill="#f5f5f5"/>
<text x="710" y="1636" text-anchor="end" font-family='"Liberation Mono", monospace' font-size="30" letter-spacing="-2" fill="#000000">MCDU</text>
<text x="715" y="1636" font-family='"Liberation Mono", monospace' font-size="30" letter-spacing="-2" fill="#000000">=0</text>
<rect x="464" y="1646" width="288" height="40" fill="#f5f5f5"/>
<text x="710" y="1678" text-anchor="end" font-family='"Liberation Mono", monospace' font-size="30" letter-spacing="-2" fill="#000000">__A21_1__SHINC</text>
<text x="715" y="1678" font-family='"Liberation Mono", monospace' font-size="30" letter-spacing="-2" fill="#000000">=0</text>
<rect x="464" y="1688" width="288" height="40" fill="#f5f5f5"/>
<text x="710" y="1720" text-anchor="end" font-family='"Liberation Mono", monospace' font-size="30" letter-spacing="-2" fill="#000000">__A21_1__SHANC</text>
<text x="715" y="1720" font-family='"Liberation Mono", monospace' font-size="30" letter-spacing="-2" fill="#000000">=0</text>
</g>
<rect x="464" y="1730" width="288" height="10" fill="#f5f5f5"/>
<rect x="464" y="1740" width="288" height="24" fill="#fafafa"/>
<rect x="470" y="1746" width="268" height="12" rx="6" fill="#a6a6a6"/>
<text x="764" y="128" font-family='"Liberation Sans", sans-serif' font-size="23" fill="#262626">Waves</text>
<rect x="834" y="120" width="2998" height="2" fill="#c4c4c4"/>
<rect x="764" y="126" width="2" height="1640" fill="#c4c4c4"/>
<rect x="3830" y="120" width="2" height="1646" fill="#c4c4c4"/>
<rect x="764" y="1764" width="3068" height="2" fill="#c4c4c4"/>
<rect x="3806" y="136" width="24" height="1604" fill="#fafafa"/>
<rect x="766" y="1740" width="3040" height="24" fill="#fafafa"/>
<rect x="3806" y="1740" width="24" height="24" fill="#f5f5f5"/>
<rect x="3812" y="142" width="12" height="1592" rx="6" fill="#a6a6a6"/>
<rect x="772" y="1746" width="80" height="12" rx="6" fill="#a6a6a6"/>
<defs><clipPath id="wclip"><rect x="766" y="136" width="3040" height="1604"/></clipPath></defs>
<g clip-path="url(#wclip)">
<rect x="766" y="136" width="3040" height="1604" fill="#000000"/>
<g shape-rendering="crispEdges">
<rect x="766" y="158" width="3040" height="2" fill="#202070"/>
<rect x="766" y="160" width="2" height="16" fill="#202070"/>
<rect x="885" y="160" width="2" height="16" fill="#202070"/>
<rect x="1004" y="160" width="2" height="16" fill="#202070"/>
<rect x="1124" y="160" width="2" height="16" fill="#202070"/>
<rect x="1243" y="160" width="2" height="16" fill="#202070"/>
<rect x="1362" y="160" width="2" height="16" fill="#202070"/>
<rect x="1481" y="160" width="2" height="16" fill="#202070"/>
<rect x="1600" y="160" width="2" height="16" fill="#202070"/>
<rect x="1720" y="160" width="2" height="16" fill="#202070"/>
<rect x="1839" y="160" width="2" height="16" fill="#202070"/>
<rect x="1958" y="160" width="2" height="16" fill="#202070"/>
<rect x="2077" y="160" width="2" height="16" fill="#202070"/>
<rect x="2196" y="160" width="2" height="16" fill="#202070"/>
<rect x="2316" y="160" width="2" height="16" fill="#202070"/>
<rect x="2435" y="160" width="2" height="16" fill="#202070"/>
<rect x="2554" y="160" width="2" height="16" fill="#202070"/>
<rect x="2673" y="160" width="2" height="16" fill="#202070"/>
<rect x="2792" y="160" width="2" height="16" fill="#202070"/>
<rect x="2912" y="160" width="2" height="16" fill="#202070"/>
<rect x="3031" y="160" width="2" height="16" fill="#202070"/>
<rect x="3150" y="160" width="2" height="16" fill="#202070"/>
<rect x="3269" y="160" width="2" height="16" fill="#202070"/>
<rect x="3388" y="160" width="2" height="16" fill="#202070"/>
<rect x="3508" y="160" width="2" height="16" fill="#202070"/>
<rect x="3627" y="160" width="2" height="16" fill="#202070"/>
<rect x="3746" y="160" width="2" height="16" fill="#202070"/>
<rect x="766" y="136" width="2" height="1604" fill="#202070"/>
<rect x="1958" y="136" width="2" height="1604" fill="#202070"/>
<rect x="3150" y="136" width="2" height="1604" fill="#202070"/>
<rect x="766" y="216" width="3040" height="2" fill="#202070"/>
<rect x="766" y="258" width="3040" height="2" fill="#202070"/>
<rect x="766" y="300" width="3040" height="2" fill="#202070"/>
<rect x="766" y="342" width="3040" height="2" fill="#202070"/>
<rect x="766" y="384" width="3040" height="2" fill="#202070"/>
<rect x="766" y="426" width="3040" height="2" fill="#202070"/>
<rect x="766" y="468" width="3040" height="2" fill="#202070"/>
<rect x="766" y="510" width="3040" height="2" fill="#202070"/>
<rect x="766" y="552" width="3040" height="2" fill="#202070"/>
<rect x="766" y="594" width="3040" height="2" fill="#202070"/>
<rect x="766" y="636" width="3040" height="2" fill="#202070"/>
<rect x="766" y="678" width="3040" height="2" fill="#202070"/>
<rect x="766" y="720" width="3040" height="2" fill="#202070"/>
<rect x="766" y="762" width="3040" height="2" fill="#202070"/>
<rect x="766" y="804" width="3040" height="2" fill="#202070"/>
<rect x="766" y="846" width="3040" height="2" fill="#202070"/>
<rect x="766" y="888" width="3040" height="2" fill="#202070"/>
<rect x="766" y="930" width="3040" height="2" fill="#202070"/>
<rect x="766" y="972" width="3040" height="2" fill="#202070"/>
<rect x="766" y="1014" width="3040" height="2" fill="#202070"/>
<rect x="766" y="1056" width="3040" height="2" fill="#202070"/>
<rect x="766" y="1098" width="3040" height="2" fill="#202070"/>
<rect x="766" y="1140" width="3040" height="2" fill="#202070"/>
<rect x="766" y="1182" width="3040" height="2" fill="#202070"/>
<rect x="766" y="1224" width="3040" height="2" fill="#202070"/>
<rect x="766" y="1266" width="3040" height="2" fill="#202070"/>
<rect x="766" y="1308" width="3040" height="2" fill="#202070"/>
<rect x="766" y="1350" width="3040" height="2" fill="#202070"/>
<rect x="766" y="1392" width="3040" height="2" fill="#202070"/>
<rect x="766" y="1434" width="3040" height="2" fill="#202070"/>
<rect x="766" y="1476" width="3040" height="2" fill="#202070"/>
<rect x="766" y="1518" width="3040" height="2" fill="#202070"/>
<rect x="766" y="1560" width="3040" height="2" fill="#202070"/>
<rect x="766" y="1602" width="3040" height="2" fill="#202070"/>
<rect x="766" y="1644" width="3040" height="2" fill="#202070"/>
<rect x="766" y="1686" width="3040" height="2" fill="#202070"/>
<rect x="766" y="1728" width="3040" height="2" fill="#202070"/>
</g>
<text x="764" y="154" text-anchor="start" font-family='"Liberation Mono", monospace' font-size="22" letter-spacing="-1.1" fill="#ffffff" xml:space="preserve">0</text>
<text x="1959" y="154" text-anchor="middle" font-family='"Liberation Mono", monospace' font-size="22" letter-spacing="-1.1" fill="#ffffff" xml:space="preserve">100 us</text>
<text x="3151" y="154" text-anchor="middle" font-family='"Liberation Mono", monospace' font-size="22" letter-spacing="-1.1" fill="#ffffff" xml:space="preserve">200 us</text>
<g shape-rendering="crispEdges">
<rect x="766" y="224" width="2" height="32" fill="#00ff00"/>
<rect x="766" y="224" width="60" height="2" fill="#00ff00"/>
<rect x="824" y="224" width="2" height="32" fill="#00ff00"/>
<rect x="824" y="254" width="2984" height="2" fill="#008000"/>
<rect x="766" y="266" width="2" height="32" fill="#00ff00"/>
<rect x="766" y="266" width="84" height="2" fill="#00ff00"/>
<rect x="848" y="266" width="2" height="32" fill="#00ff00"/>
<rect x="848" y="296" width="2960" height="2" fill="#008000"/>
<rect x="826" y="266" width="2" height="32" fill="#00ff00"/>
<rect x="766" y="308" width="2" height="32" fill="#00ff00"/>
<rect x="766" y="308" width="368" height="2" fill="#00ff00"/>
<rect x="1132" y="308" width="2" height="32" fill="#00ff00"/>
<rect x="1132" y="338" width="6" height="2" fill="#008000"/>
<rect x="1136" y="308" width="2" height="32" fill="#00ff00"/>
<rect x="1136" y="308" width="138" height="2" fill="#00ff00"/>
<rect x="1272" y="308" width="2" height="32" fill="#00ff00"/>
<rect x="1272" y="338" width="6" height="2" fill="#008000"/>
<rect x="1276" y="308" width="2" height="32" fill="#00ff00"/>
<rect x="1276" y="308" width="278" height="2" fill="#00ff00"/>
<rect x="1552" y="308" width="2" height="32" fill="#00ff00"/>
<rect x="1552" y="338" width="6" height="2" fill="#008000"/>
<rect x="1556" y="308" width="2" height="32" fill="#00ff00"/>
<rect x="1556" y="308" width="276" height="2" fill="#00ff00"/>
<rect x="1830" y="308" width="2" height="32" fill="#00ff00"/>
<rect x="1830" y="338" width="6" height="2" fill="#008000"/>
<rect x="1834" y="308" width="2" height="32" fill="#00ff00"/>
<rect x="1834" y="308" width="138" height="2" fill="#00ff00"/>
<rect x="1970" y="308" width="2" height="32" fill="#00ff00"/>
<rect x="1970" y="338" width="6" height="2" fill="#008000"/>
<rect x="1974" y="308" width="2" height="32" fill="#00ff00"/>
<rect x="1974" y="308" width="138" height="2" fill="#00ff00"/>
<rect x="2110" y="308" width="2" height="32" fill="#00ff00"/>
<rect x="2110" y="338" width="6" height="2" fill="#008000"/>
<rect x="2114" y="308" width="2" height="32" fill="#00ff00"/>
<rect x="2114" y="308" width="278" height="2" fill="#00ff00"/>
<rect x="2390" y="308" width="2" height="32" fill="#00ff00"/>
<rect x="2390" y="338" width="6" height="2" fill="#008000"/>
<rect x="2394" y="308" width="2" height="32" fill="#00ff00"/>
<rect x="2394" y="308" width="278" height="2" fill="#00ff00"/>
<rect x="2670" y="308" width="2" height="32" fill="#00ff00"/>
<rect x="2670" y="338" width="6" height="2" fill="#008000"/>
<rect x="2674" y="308" width="2" height="32" fill="#00ff00"/>
<rect x="2674" y="308" width="276" height="2" fill="#00ff00"/>
<rect x="2948" y="308" width="2" height="32" fill="#00ff00"/>
<rect x="2948" y="338" width="6" height="2" fill="#008000"/>
<rect x="2952" y="308" width="2" height="32" fill="#00ff00"/>
<rect x="2952" y="308" width="278" height="2" fill="#00ff00"/>
<rect x="3228" y="308" width="2" height="32" fill="#00ff00"/>
<rect x="3228" y="338" width="6" height="2" fill="#008000"/>
<rect x="3232" y="308" width="2" height="32" fill="#00ff00"/>
<rect x="3232" y="308" width="278" height="2" fill="#00ff00"/>
<rect x="3508" y="308" width="2" height="32" fill="#00ff00"/>
<rect x="3508" y="338" width="6" height="2" fill="#008000"/>
<rect x="3512" y="308" width="2" height="32" fill="#00ff00"/>
<rect x="3512" y="308" width="276" height="2" fill="#00ff00"/>
<rect x="3786" y="308" width="2" height="32" fill="#00ff00"/>
<rect x="3786" y="338" width="6" height="2" fill="#008000"/>
<rect x="3790" y="308" width="2" height="32" fill="#00ff00"/>
<rect x="3790" y="308" width="18" height="2" fill="#00ff00"/>
<rect x="766" y="350" width="2" height="32" fill="#00ff00"/>
<rect x="766" y="380" width="66" height="2" fill="#008000"/>
<rect x="830" y="350" width="2" height="32" fill="#00ff00"/>
<rect x="830" y="350" width="164" height="2" fill="#00ff00"/>
<rect x="992" y="350" width="2" height="32" fill="#00ff00"/>
<rect x="992" y="380" width="2816" height="2" fill="#008000"/>
<rect x="766" y="392" width="2" height="32" fill="#00ff00"/>
<rect x="766" y="422" width="368" height="2" fill="#008000"/>
<rect x="1132" y="392" width="2" height="32" fill="#00ff00"/>
<rect x="1132" y="392" width="142" height="2" fill="#00ff00"/>
<rect x="1272" y="392" width="2" height="32" fill="#00ff00"/>
<rect x="1272" y="422" width="142" height="2" fill="#008000"/>
<rect x="1412" y="392" width="2" height="32" fill="#00ff00"/>
<rect x="1412" y="392" width="142" height="2" fill="#00ff00"/>
<rect x="1552" y="392" width="2" height="32" fill="#00ff00"/>
<rect x="1552" y="422" width="142" height="2" fill="#008000"/>
<rect x="1692" y="392" width="2" height="32" fill="#00ff00"/>
<rect x="1692" y="392" width="142" height="2" fill="#00ff00"/>
<rect x="1832" y="392" width="2" height="32" fill="#00ff00"/>
<rect x="1832" y="422" width="140" height="2" fill="#008000"/>
<rect x="1970" y="392" width="2" height="32" fill="#00ff00"/>
<rect x="1970" y="392" width="142" height="2" fill="#00ff00"/>
<rect x="2110" y="392" width="2" height="32" fill="#00ff00"/>
<rect x="2110" y="422" width="142" height="2" fill="#008000"/>
<rect x="2250" y="392" width="2" height="32" fill="#00ff00"/>
<rect x="2250" y="392" width="142" height="2" fill="#00ff00"/>
<rect x="2390" y="392" width="2" height="32" fill="#00ff00"/>
<rect x="2390" y="422" width="142" height="2" fill="#008000"/>
<rect x="2530" y="392" width="2" height="32" fill="#00ff00"/>
<rect x="2530" y="392" width="142" height="2" fill="#00ff00"/>
<rect x="2670" y="392" width="2" height="32" fill="#00ff00"/>
<rect x="2670" y="422" width="142" height="2" fill="#008000"/>
<rect x="2810" y="392" width="2" height="32" fill="#00ff00"/>
<rect x="2810" y="392" width="140" height="2" fill="#00ff00"/>
<rect x="2948" y="392" width="2" height="32" fill="#00ff00"/>
<rect x="2948" y="422" width="142" height="2" fill="#008000"/>
<rect x="3088" y="392" width="2" height="32" fill="#00ff00"/>
<rect x="3088" y="392" width="142" height="2" fill="#00ff00"/>
<rect x="3228" y="392" width="2" height="32" fill="#00ff00"/>
<rect x="3228" y="422" width="142" height="2" fill="#008000"/>
<rect x="3368" y="392" width="2" height="32" fill="#00ff00"/>
<rect x="3368" y="392" width="142" height="2" fill="#00ff00"/>
<rect x="3508" y="392" width="2" height="32" fill="#00ff00"/>
<rect x="3508" y="422" width="142" height="2" fill="#008000"/>
<rect x="3648" y="392" width="2" height="32" fill="#00ff00"/>
<rect x="3648" y="392" width="140" height="2" fill="#00ff00"/>
<rect x="3786" y="392" width="2" height="32" fill="#00ff00"/>
<rect x="3786" y="422" width="22" height="2" fill="#008000"/>
<rect x="766" y="434" width="2" height="32" fill="#00ff00"/>
<rect x="766" y="464" width="3042" height="2" fill="#008000"/>
<rect x="766" y="476" width="2" height="32" fill="#00ff00"/>
<rect x="766" y="506" width="3042" height="2" fill="#008000"/>
<rect x="766" y="518" width="2" height="32" fill="#00ff00"/>
<rect x="766" y="548" width="3042" height="2" fill="#008000"/>
<rect x="766" y="560" width="2" height="32" fill="#00ff00"/>
<rect x="766" y="590" width="444" height="2" fill="#008000"/>
<rect x="1208" y="560" width="2" height="32" fill="#00ff00"/>
<rect x="1208" y="560" width="90" height="2" fill="#00ff00"/>
<rect x="1296" y="560" width="2" height="32" fill="#00ff00"/>
<rect x="1296" y="590" width="612" height="2" fill="#008000"/>
<rect x="1906" y="560" width="2" height="32" fill="#00ff00"/>
<rect x="1906" y="560" width="90" height="2" fill="#00ff00"/>
<rect x="1994" y="560" width="2" height="32" fill="#00ff00"/>
<rect x="1994" y="590" width="54" height="2" fill="#008000"/>
<rect x="2046" y="560" width="2" height="32" fill="#00ff00"/>
<rect x="2046" y="560" width="90" height="2" fill="#00ff00"/>
<rect x="2134" y="560" width="2" height="32" fill="#00ff00"/>
<rect x="2134" y="590" width="192" height="2" fill="#008000"/>
<rect x="2324" y="560" width="2" height="32" fill="#00ff00"/>
<rect x="2324" y="560" width="92" height="2" fill="#00ff00"/>
<rect x="2414" y="560" width="2" height="32" fill="#00ff00"/>
<rect x="2414" y="590" width="472" height="2" fill="#008000"/>
<rect x="2884" y="560" width="2" height="32" fill="#00ff00"/>
<rect x="2884" y="560" width="90" height="2" fill="#00ff00"/>
<rect x="2972" y="560" width="2" height="32" fill="#00ff00"/>
<rect x="2972" y="590" width="64" height="2" fill="#008000"/>
<rect x="3034" y="560" width="2" height="32" fill="#00ff00"/>
<rect x="3034" y="560" width="80" height="2" fill="#00ff00"/>
<rect x="3112" y="560" width="2" height="32" fill="#00ff00"/>
<rect x="3112" y="590" width="52" height="2" fill="#008000"/>
<rect x="3162" y="560" width="2" height="32" fill="#00ff00"/>
<rect x="3162" y="560" width="92" height="2" fill="#00ff00"/>
<rect x="3252" y="560" width="2" height="32" fill="#00ff00"/>
<rect x="3252" y="590" width="192" height="2" fill="#008000"/>
<rect x="3442" y="560" width="2" height="32" fill="#00ff00"/>
<rect x="3442" y="560" width="90" height="2" fill="#00ff00"/>
<rect x="3530" y="560" width="2" height="32" fill="#00ff00"/>
<rect x="3530" y="590" width="278" height="2" fill="#008000"/>
<rect x="766" y="602" width="2" height="32" fill="#00ff00"/>
<rect x="766" y="632" width="444" height="2" fill="#008000"/>
<rect x="1208" y="602" width="2" height="32" fill="#00ff00"/>
<rect x="1208" y="602" width="90" height="2" fill="#00ff00"/>
<rect x="1296" y="602" width="2" height="32" fill="#00ff00"/>
<rect x="1296" y="632" width="192" height="2" fill="#008000"/>
<rect x="1486" y="602" width="2" height="32" fill="#00ff00"/>
<rect x="1486" y="602" width="90" height="2" fill="#00ff00"/>
<rect x="1574" y="602" width="2" height="32" fill="#00ff00"/>
<rect x="1574" y="632" width="334" height="2" fill="#008000"/>
<rect x="1906" y="602" width="2" height="32" fill="#00ff00"/>
<rect x="1906" y="602" width="90" height="2" fill="#00ff00"/>
<rect x="1994" y="602" width="2" height="32" fill="#00ff00"/>
<rect x="1994" y="632" width="54" height="2" fill="#008000"/>
<rect x="2046" y="602" width="2" height="32" fill="#00ff00"/>
<rect x="2046" y="602" width="90" height="2" fill="#00ff00"/>
<rect x="2134" y="602" width="2" height="32" fill="#00ff00"/>
<rect x="2134" y="632" width="472" height="2" fill="#008000"/>
<rect x="2604" y="602" width="2" height="32" fill="#00ff00"/>
<rect x="2604" y="602" width="90" height="2" fill="#00ff00"/>
<rect x="2692" y="602" width="2" height="32" fill="#00ff00"/>
<rect x="2692" y="632" width="564" height="2" fill="#008000"/>
<rect x="3254" y="602" width="2" height="32" fill="#00ff00"/>
<rect x="3254" y="602" width="80" height="2" fill="#00ff00"/>
<rect x="3332" y="602" width="2" height="32" fill="#00ff00"/>
<rect x="3332" y="632" width="6" height="2" fill="#008000"/>
<rect x="3336" y="602" width="2" height="32" fill="#00ff00"/>
<rect x="3336" y="602" width="58" height="2" fill="#00ff00"/>
<rect x="3392" y="602" width="2" height="32" fill="#00ff00"/>
<rect x="3392" y="632" width="202" height="2" fill="#008000"/>
<rect x="3592" y="602" width="2" height="32" fill="#00ff00"/>
<rect x="3592" y="602" width="80" height="2" fill="#00ff00"/>
<rect x="3670" y="602" width="2" height="32" fill="#00ff00"/>
<rect x="3670" y="632" width="54" height="2" fill="#008000"/>
<rect x="3722" y="602" width="2" height="32" fill="#00ff00"/>
<rect x="3722" y="602" width="86" height="2" fill="#00ff00"/>
<rect x="766" y="644" width="2" height="32" fill="#00ff00"/>
<rect x="766" y="674" width="304" height="2" fill="#008000"/>
<rect x="1068" y="644" width="2" height="32" fill="#00ff00"/>
<rect x="1068" y="644" width="90" height="2" fill="#00ff00"/>
<rect x="1156" y="644" width="2" height="32" fill="#00ff00"/>
<rect x="1156" y="674" width="192" height="2" fill="#008000"/>
<rect x="1346" y="644" width="2" height="32" fill="#00ff00"/>
<rect x="1346" y="644" width="92" height="2" fill="#00ff00"/>
<rect x="1436" y="644" width="2" height="32" fill="#00ff00"/>
<rect x="1436" y="674" width="52" height="2" fill="#008000"/>
<rect x="1486" y="644" width="2" height="32" fill="#00ff00"/>
<rect x="1486" y="644" width="90" height="2" fill="#00ff00"/>
<rect x="1574" y="644" width="2" height="32" fill="#00ff00"/>
<rect x="1574" y="674" width="64" height="2" fill="#008000"/>
<rect x="1636" y="644" width="2" height="32" fill="#00ff00"/>
<rect x="1636" y="644" width="80" height="2" fill="#00ff00"/>
<rect x="1714" y="644" width="2" height="32" fill="#00ff00"/>
<rect x="1714" y="674" width="54" height="2" fill="#008000"/>
<rect x="1766" y="644" width="2" height="32" fill="#00ff00"/>
<rect x="1766" y="644" width="90" height="2" fill="#00ff00"/>
<rect x="1854" y="644" width="2" height="32" fill="#00ff00"/>
<rect x="1854" y="674" width="194" height="2" fill="#008000"/>
<rect x="2046" y="644" width="2" height="32" fill="#00ff00"/>
<rect x="2046" y="644" width="90" height="2" fill="#00ff00"/>
<rect x="2134" y="644" width="2" height="32" fill="#00ff00"/>
<rect x="2134" y="674" width="1030" height="2" fill="#008000"/>
<rect x="3162" y="644" width="2" height="32" fill="#00ff00"/>
<rect x="3162" y="644" width="92" height="2" fill="#00ff00"/>
<rect x="3252" y="644" width="2" height="32" fill="#00ff00"/>
<rect x="3252" y="674" width="556" height="2" fill="#008000"/>
<rect x="1378" y="644" width="4" height="32" fill="#00d400"/>
<rect x="766" y="686" width="2" height="32" fill="#00ff00"/>
<rect x="766" y="716" width="444" height="2" fill="#008000"/>
<rect x="1208" y="686" width="2" height="32" fill="#00ff00"/>
<rect x="1208" y="686" width="90" height="2" fill="#00ff00"/>
<rect x="1296" y="686" width="2" height="32" fill="#00ff00"/>
<rect x="1296" y="716" width="52" height="2" fill="#008000"/>
<rect x="1346" y="686" width="2" height="32" fill="#00ff00"/>
<rect x="1346" y="686" width="92" height="2" fill="#00ff00"/>
<rect x="1436" y="686" width="2" height="32" fill="#00ff00"/>
<rect x="1436" y="716" width="202" height="2" fill="#008000"/>
<rect x="1636" y="686" width="2" height="32" fill="#00ff00"/>
<rect x="1636" y="686" width="80" height="2" fill="#00ff00"/>
<rect x="1714" y="686" width="2" height="32" fill="#00ff00"/>
<rect x="1714" y="716" width="54" height="2" fill="#008000"/>
<rect x="1766" y="686" width="2" height="32" fill="#00ff00"/>
<rect x="1766" y="686" width="90" height="2" fill="#00ff00"/>
<rect x="1854" y="686" width="2" height="32" fill="#00ff00"/>
<rect x="1854" y="716" width="1954" height="2" fill="#008000"/>
<rect x="1378" y="686" width="4" height="32" fill="#00d400"/>
<rect x="766" y="728" width="2" height="32" fill="#00ff00"/>
<rect x="766" y="758" width="582" height="2" fill="#008000"/>
<rect x="1346" y="728" width="2" height="32" fill="#00ff00"/>
<rect x="1346" y="728" width="92" height="2" fill="#00ff00"/>
<rect x="1436" y="728" width="2" height="32" fill="#00ff00"/>
<rect x="1436" y="758" width="52" height="2" fill="#008000"/>
<rect x="1486" y="728" width="2" height="32" fill="#00ff00"/>
<rect x="1486" y="728" width="90" height="2" fill="#00ff00"/>
<rect x="1574" y="728" width="2" height="32" fill="#00ff00"/>
<rect x="1574" y="758" width="64" height="2" fill="#008000"/>
<rect x="1636" y="728" width="2" height="32" fill="#00ff00"/>
<rect x="1636" y="728" width="80" height="2" fill="#00ff00"/>
<rect x="1714" y="728" width="2" height="32" fill="#00ff00"/>
<rect x="1714" y="758" width="612" height="2" fill="#008000"/>
<rect x="2324" y="728" width="2" height="32" fill="#00ff00"/>
<rect x="2324" y="728" width="92" height="2" fill="#00ff00"/>
<rect x="2414" y="728" width="2" height="32" fill="#00ff00"/>
<rect x="2414" y="758" width="192" height="2" fill="#008000"/>
<rect x="2604" y="728" width="2" height="32" fill="#00ff00"/>
<rect x="2604" y="728" width="90" height="2" fill="#00ff00"/>
<rect x="2692" y="728" width="2" height="32" fill="#00ff00"/>
<rect x="2692" y="758" width="194" height="2" fill="#008000"/>
<rect x="2884" y="728" width="2" height="32" fill="#00ff00"/>
<rect x="2884" y="728" width="90" height="2" fill="#00ff00"/>
<rect x="2972" y="728" width="2" height="32" fill="#00ff00"/>
<rect x="2972" y="758" width="284" height="2" fill="#008000"/>
<rect x="3254" y="728" width="2" height="32" fill="#00ff00"/>
<rect x="3254" y="728" width="80" height="2" fill="#00ff00"/>
<rect x="3332" y="728" width="2" height="32" fill="#00ff00"/>
<rect x="3332" y="758" width="6" height="2" fill="#008000"/>
<rect x="3336" y="728" width="2" height="32" fill="#00ff00"/>
<rect x="3336" y="728" width="58" height="2" fill="#00ff00"/>
<rect x="3392" y="728" width="2" height="32" fill="#00ff00"/>
<rect x="3392" y="758" width="202" height="2" fill="#008000"/>
<rect x="3592" y="728" width="2" height="32" fill="#00ff00"/>
<rect x="3592" y="728" width="80" height="2" fill="#00ff00"/>
<rect x="3670" y="728" width="2" height="32" fill="#00ff00"/>
<rect x="3670" y="758" width="54" height="2" fill="#008000"/>
<rect x="3722" y="728" width="2" height="32" fill="#00ff00"/>
<rect x="3722" y="728" width="86" height="2" fill="#00ff00"/>
<rect x="1378" y="728" width="4" height="32" fill="#00d400"/>
<rect x="766" y="770" width="2" height="32" fill="#00ff00"/>
<rect x="766" y="800" width="582" height="2" fill="#008000"/>
<rect x="1346" y="770" width="2" height="32" fill="#00ff00"/>
<rect x="1346" y="770" width="92" height="2" fill="#00ff00"/>
<rect x="1436" y="770" width="2" height="32" fill="#00ff00"/>
<rect x="1436" y="800" width="202" height="2" fill="#008000"/>
<rect x="1636" y="770" width="2" height="32" fill="#00ff00"/>
<rect x="1636" y="770" width="80" height="2" fill="#00ff00"/>
<rect x="1714" y="770" width="2" height="32" fill="#00ff00"/>
<rect x="1714" y="800" width="54" height="2" fill="#008000"/>
<rect x="1766" y="770" width="2" height="32" fill="#00ff00"/>
<rect x="1766" y="770" width="90" height="2" fill="#00ff00"/>
<rect x="1854" y="770" width="2" height="32" fill="#00ff00"/>
<rect x="1854" y="800" width="472" height="2" fill="#008000"/>
<rect x="2324" y="770" width="2" height="32" fill="#00ff00"/>
<rect x="2324" y="770" width="92" height="2" fill="#00ff00"/>
<rect x="2414" y="770" width="2" height="32" fill="#00ff00"/>
<rect x="2414" y="800" width="192" height="2" fill="#008000"/>
<rect x="2604" y="770" width="2" height="32" fill="#00ff00"/>
<rect x="2604" y="770" width="90" height="2" fill="#00ff00"/>
<rect x="2692" y="770" width="2" height="32" fill="#00ff00"/>
<rect x="2692" y="800" width="194" height="2" fill="#008000"/>
<rect x="2884" y="770" width="2" height="32" fill="#00ff00"/>
<rect x="2884" y="770" width="90" height="2" fill="#00ff00"/>
<rect x="2972" y="770" width="2" height="32" fill="#00ff00"/>
<rect x="2972" y="800" width="284" height="2" fill="#008000"/>
<rect x="3254" y="770" width="2" height="32" fill="#00ff00"/>
<rect x="3254" y="770" width="80" height="2" fill="#00ff00"/>
<rect x="3332" y="770" width="2" height="32" fill="#00ff00"/>
<rect x="3332" y="800" width="6" height="2" fill="#008000"/>
<rect x="3336" y="770" width="2" height="32" fill="#00ff00"/>
<rect x="3336" y="770" width="58" height="2" fill="#00ff00"/>
<rect x="3392" y="770" width="2" height="32" fill="#00ff00"/>
<rect x="3392" y="800" width="202" height="2" fill="#008000"/>
<rect x="3592" y="770" width="2" height="32" fill="#00ff00"/>
<rect x="3592" y="770" width="80" height="2" fill="#00ff00"/>
<rect x="3670" y="770" width="2" height="32" fill="#00ff00"/>
<rect x="3670" y="800" width="54" height="2" fill="#008000"/>
<rect x="3722" y="770" width="2" height="32" fill="#00ff00"/>
<rect x="3722" y="770" width="86" height="2" fill="#00ff00"/>
<rect x="1378" y="770" width="4" height="32" fill="#00d400"/>
<rect x="766" y="812" width="2" height="32" fill="#00ff00"/>
<rect x="766" y="842" width="582" height="2" fill="#008000"/>
<rect x="1346" y="812" width="2" height="32" fill="#00ff00"/>
<rect x="1346" y="812" width="92" height="2" fill="#00ff00"/>
<rect x="1436" y="812" width="2" height="32" fill="#00ff00"/>
<rect x="1436" y="842" width="202" height="2" fill="#008000"/>
<rect x="1636" y="812" width="2" height="32" fill="#00ff00"/>
<rect x="1636" y="812" width="80" height="2" fill="#00ff00"/>
<rect x="1714" y="812" width="2" height="32" fill="#00ff00"/>
<rect x="1714" y="842" width="2094" height="2" fill="#008000"/>
<rect x="1378" y="812" width="4" height="32" fill="#00d400"/>
<rect x="766" y="854" width="2" height="32" fill="#00ff00"/>
<rect x="766" y="884" width="444" height="2" fill="#008000"/>
<rect x="1208" y="854" width="2" height="32" fill="#00ff00"/>
<rect x="1208" y="854" width="90" height="2" fill="#00ff00"/>
<rect x="1296" y="854" width="2" height="32" fill="#00ff00"/>
<rect x="1296" y="884" width="52" height="2" fill="#008000"/>
<rect x="1346" y="854" width="2" height="32" fill="#00ff00"/>
<rect x="1346" y="854" width="92" height="2" fill="#00ff00"/>
<rect x="1436" y="854" width="2" height="32" fill="#00ff00"/>
<rect x="1436" y="884" width="202" height="2" fill="#008000"/>
<rect x="1636" y="854" width="2" height="32" fill="#00ff00"/>
<rect x="1636" y="854" width="80" height="2" fill="#00ff00"/>
<rect x="1714" y="854" width="2" height="32" fill="#00ff00"/>
<rect x="1714" y="884" width="2010" height="2" fill="#008000"/>
<rect x="3722" y="854" width="2" height="32" fill="#00ff00"/>
<rect x="3722" y="854" width="86" height="2" fill="#00ff00"/>
<rect x="1378" y="854" width="4" height="32" fill="#00d400"/>
<rect x="766" y="896" width="2" height="32" fill="#00ff00"/>
<rect x="766" y="926" width="444" height="2" fill="#008000"/>
<rect x="1208" y="896" width="2" height="32" fill="#00ff00"/>
<rect x="1208" y="896" width="90" height="2" fill="#00ff00"/>
<rect x="1296" y="896" width="2" height="32" fill="#00ff00"/>
<rect x="1296" y="926" width="52" height="2" fill="#008000"/>
<rect x="1346" y="896" width="2" height="32" fill="#00ff00"/>
<rect x="1346" y="896" width="92" height="2" fill="#00ff00"/>
<rect x="1436" y="896" width="2" height="32" fill="#00ff00"/>
<rect x="1436" y="926" width="202" height="2" fill="#008000"/>
<rect x="1636" y="896" width="2" height="32" fill="#00ff00"/>
<rect x="1636" y="896" width="80" height="2" fill="#00ff00"/>
<rect x="1714" y="896" width="2" height="32" fill="#00ff00"/>
<rect x="1714" y="926" width="2010" height="2" fill="#008000"/>
<rect x="3722" y="896" width="2" height="32" fill="#00ff00"/>
<rect x="3722" y="896" width="86" height="2" fill="#00ff00"/>
<rect x="1378" y="896" width="4" height="32" fill="#00d400"/>
<rect x="766" y="938" width="2" height="32" fill="#00ff00"/>
<rect x="766" y="968" width="444" height="2" fill="#008000"/>
<rect x="1208" y="938" width="2" height="32" fill="#00ff00"/>
<rect x="1208" y="938" width="90" height="2" fill="#00ff00"/>
<rect x="1296" y="938" width="2" height="32" fill="#00ff00"/>
<rect x="1296" y="968" width="52" height="2" fill="#008000"/>
<rect x="1346" y="938" width="2" height="32" fill="#00ff00"/>
<rect x="1346" y="938" width="92" height="2" fill="#00ff00"/>
<rect x="1436" y="938" width="2" height="32" fill="#00ff00"/>
<rect x="1436" y="968" width="202" height="2" fill="#008000"/>
<rect x="1636" y="938" width="2" height="32" fill="#00ff00"/>
<rect x="1636" y="938" width="80" height="2" fill="#00ff00"/>
<rect x="1714" y="938" width="2" height="32" fill="#00ff00"/>
<rect x="1714" y="968" width="2010" height="2" fill="#008000"/>
<rect x="3722" y="938" width="2" height="32" fill="#00ff00"/>
<rect x="3722" y="938" width="86" height="2" fill="#00ff00"/>
<rect x="1378" y="938" width="4" height="32" fill="#00d400"/>
<rect x="766" y="980" width="2" height="32" fill="#00ff00"/>
<rect x="766" y="1010" width="444" height="2" fill="#008000"/>
<rect x="1208" y="980" width="2" height="32" fill="#00ff00"/>
<rect x="1208" y="980" width="90" height="2" fill="#00ff00"/>
<rect x="1296" y="980" width="2" height="32" fill="#00ff00"/>
<rect x="1296" y="1010" width="52" height="2" fill="#008000"/>
<rect x="1346" y="980" width="2" height="32" fill="#00ff00"/>
<rect x="1346" y="980" width="92" height="2" fill="#00ff00"/>
<rect x="1436" y="980" width="2" height="32" fill="#00ff00"/>
<rect x="1436" y="1010" width="202" height="2" fill="#008000"/>
<rect x="1636" y="980" width="2" height="32" fill="#00ff00"/>
<rect x="1636" y="980" width="80" height="2" fill="#00ff00"/>
<rect x="1714" y="980" width="2" height="32" fill="#00ff00"/>
<rect x="1714" y="1010" width="2010" height="2" fill="#008000"/>
<rect x="3722" y="980" width="2" height="32" fill="#00ff00"/>
<rect x="3722" y="980" width="86" height="2" fill="#00ff00"/>
<rect x="1378" y="980" width="4" height="32" fill="#00d400"/>
<rect x="766" y="1022" width="2" height="32" fill="#00ff00"/>
<rect x="766" y="1052" width="444" height="2" fill="#008000"/>
<rect x="1208" y="1022" width="2" height="32" fill="#00ff00"/>
<rect x="1208" y="1022" width="90" height="2" fill="#00ff00"/>
<rect x="1296" y="1022" width="2" height="32" fill="#00ff00"/>
<rect x="1296" y="1052" width="52" height="2" fill="#008000"/>
<rect x="1346" y="1022" width="2" height="32" fill="#00ff00"/>
<rect x="1346" y="1022" width="92" height="2" fill="#00ff00"/>
<rect x="1436" y="1022" width="2" height="32" fill="#00ff00"/>
<rect x="1436" y="1052" width="52" height="2" fill="#008000"/>
<rect x="1486" y="1022" width="2" height="32" fill="#00ff00"/>
<rect x="1486" y="1022" width="90" height="2" fill="#00ff00"/>
<rect x="1574" y="1022" width="2" height="32" fill="#00ff00"/>
<rect x="1574" y="1052" width="64" height="2" fill="#008000"/>
<rect x="1636" y="1022" width="2" height="32" fill="#00ff00"/>
<rect x="1636" y="1022" width="80" height="2" fill="#00ff00"/>
<rect x="1714" y="1022" width="2" height="32" fill="#00ff00"/>
<rect x="1714" y="1052" width="54" height="2" fill="#008000"/>
<rect x="1766" y="1022" width="2" height="32" fill="#00ff00"/>
<rect x="1766" y="1022" width="90" height="2" fill="#00ff00"/>
<rect x="1854" y="1022" width="2" height="32" fill="#00ff00"/>
<rect x="1854" y="1052" width="472" height="2" fill="#008000"/>
<rect x="2324" y="1022" width="2" height="32" fill="#00ff00"/>
<rect x="2324" y="1022" width="92" height="2" fill="#00ff00"/>
<rect x="2414" y="1022" width="2" height="32" fill="#00ff00"/>
<rect x="2414" y="1052" width="192" height="2" fill="#008000"/>
<rect x="2604" y="1022" width="2" height="32" fill="#00ff00"/>
<rect x="2604" y="1022" width="90" height="2" fill="#00ff00"/>
<rect x="2692" y="1022" width="2" height="32" fill="#00ff00"/>
<rect x="2692" y="1052" width="194" height="2" fill="#008000"/>
<rect x="2884" y="1022" width="2" height="32" fill="#00ff00"/>
<rect x="2884" y="1022" width="90" height="2" fill="#00ff00"/>
<rect x="2972" y="1022" width="2" height="32" fill="#00ff00"/>
<rect x="2972" y="1052" width="284" height="2" fill="#008000"/>
<rect x="3254" y="1022" width="2" height="32" fill="#00ff00"/>
<rect x="3254" y="1022" width="80" height="2" fill="#00ff00"/>
<rect x="3332" y="1022" width="2" height="32" fill="#00ff00"/>
<rect x="3332" y="1052" width="6" height="2" fill="#008000"/>
<rect x="3336" y="1022" width="2" height="32" fill="#00ff00"/>
<rect x="3336" y="1022" width="58" height="2" fill="#00ff00"/>
<rect x="3392" y="1022" width="2" height="32" fill="#00ff00"/>
<rect x="3392" y="1052" width="52" height="2" fill="#008000"/>
<rect x="3442" y="1022" width="2" height="32" fill="#00ff00"/>
<rect x="3442" y="1022" width="90" height="2" fill="#00ff00"/>
<rect x="3530" y="1022" width="2" height="32" fill="#00ff00"/>
<rect x="3530" y="1052" width="64" height="2" fill="#008000"/>
<rect x="3592" y="1022" width="2" height="32" fill="#00ff00"/>
<rect x="3592" y="1022" width="80" height="2" fill="#00ff00"/>
<rect x="3670" y="1022" width="2" height="32" fill="#00ff00"/>
<rect x="3670" y="1052" width="54" height="2" fill="#008000"/>
<rect x="3722" y="1022" width="2" height="32" fill="#00ff00"/>
<rect x="3722" y="1022" width="86" height="2" fill="#00ff00"/>
<rect x="1378" y="1022" width="4" height="32" fill="#00d400"/>
<rect x="766" y="1064" width="2" height="32" fill="#00ff00"/>
<rect x="766" y="1094" width="444" height="2" fill="#008000"/>
<rect x="1208" y="1064" width="2" height="32" fill="#00ff00"/>
<rect x="1208" y="1064" width="90" height="2" fill="#00ff00"/>
<rect x="1296" y="1064" width="2" height="32" fill="#00ff00"/>
<rect x="1296" y="1094" width="52" height="2" fill="#008000"/>
<rect x="1346" y="1064" width="2" height="32" fill="#00ff00"/>
<rect x="1346" y="1064" width="92" height="2" fill="#00ff00"/>
<rect x="1436" y="1064" width="2" height="32" fill="#00ff00"/>
<rect x="1436" y="1094" width="52" height="2" fill="#008000"/>
<rect x="1486" y="1064" width="2" height="32" fill="#00ff00"/>
<rect x="1486" y="1064" width="90" height="2" fill="#00ff00"/>
<rect x="1574" y="1064" width="2" height="32" fill="#00ff00"/>
<rect x="1574" y="1094" width="64" height="2" fill="#008000"/>
<rect x="1636" y="1064" width="2" height="32" fill="#00ff00"/>
<rect x="1636" y="1064" width="80" height="2" fill="#00ff00"/>
<rect x="1714" y="1064" width="2" height="32" fill="#00ff00"/>
<rect x="1714" y="1094" width="54" height="2" fill="#008000"/>
<rect x="1766" y="1064" width="2" height="32" fill="#00ff00"/>
<rect x="1766" y="1064" width="90" height="2" fill="#00ff00"/>
<rect x="1854" y="1064" width="2" height="32" fill="#00ff00"/>
<rect x="1854" y="1094" width="194" height="2" fill="#008000"/>
<rect x="2046" y="1064" width="2" height="32" fill="#00ff00"/>
<rect x="2046" y="1064" width="90" height="2" fill="#00ff00"/>
<rect x="2134" y="1064" width="2" height="32" fill="#00ff00"/>
<rect x="2134" y="1094" width="192" height="2" fill="#008000"/>
<rect x="2324" y="1064" width="2" height="32" fill="#00ff00"/>
<rect x="2324" y="1064" width="92" height="2" fill="#00ff00"/>
<rect x="2414" y="1064" width="2" height="32" fill="#00ff00"/>
<rect x="2414" y="1094" width="192" height="2" fill="#008000"/>
<rect x="2604" y="1064" width="2" height="32" fill="#00ff00"/>
<rect x="2604" y="1064" width="90" height="2" fill="#00ff00"/>
<rect x="2692" y="1064" width="2" height="32" fill="#00ff00"/>
<rect x="2692" y="1094" width="472" height="2" fill="#008000"/>
<rect x="3162" y="1064" width="2" height="32" fill="#00ff00"/>
<rect x="3162" y="1064" width="92" height="2" fill="#00ff00"/>
<rect x="3252" y="1064" width="2" height="32" fill="#00ff00"/>
<rect x="3252" y="1094" width="192" height="2" fill="#008000"/>
<rect x="3442" y="1064" width="2" height="32" fill="#00ff00"/>
<rect x="3442" y="1064" width="90" height="2" fill="#00ff00"/>
<rect x="3530" y="1064" width="2" height="32" fill="#00ff00"/>
<rect x="3530" y="1094" width="194" height="2" fill="#008000"/>
<rect x="3722" y="1064" width="2" height="32" fill="#00ff00"/>
<rect x="3722" y="1064" width="86" height="2" fill="#00ff00"/>
<rect x="1378" y="1064" width="4" height="32" fill="#00d400"/>
<rect x="766" y="1106" width="2" height="32" fill="#00ff00"/>
<rect x="766" y="1136" width="444" height="2" fill="#008000"/>
<rect x="1208" y="1106" width="2" height="32" fill="#00ff00"/>
<rect x="1208" y="1106" width="90" height="2" fill="#00ff00"/>
<rect x="1296" y="1106" width="2" height="32" fill="#00ff00"/>
<rect x="1296" y="1136" width="52" height="2" fill="#008000"/>
<rect x="1346" y="1106" width="2" height="32" fill="#00ff00"/>
<rect x="1346" y="1106" width="92" height="2" fill="#00ff00"/>
<rect x="1436" y="1106" width="2" height="32" fill="#00ff00"/>
<rect x="1436" y="1136" width="202" height="2" fill="#008000"/>
<rect x="1636" y="1106" width="2" height="32" fill="#00ff00"/>
<rect x="1636" y="1106" width="80" height="2" fill="#00ff00"/>
<rect x="1714" y="1106" width="2" height="32" fill="#00ff00"/>
<rect x="1714" y="1136" width="334" height="2" fill="#008000"/>
<rect x="2046" y="1106" width="2" height="32" fill="#00ff00"/>
<rect x="2046" y="1106" width="90" height="2" fill="#00ff00"/>
<rect x="2134" y="1106" width="2" height="32" fill="#00ff00"/>
<rect x="2134" y="1136" width="752" height="2" fill="#008000"/>
<rect x="2884" y="1106" width="2" height="32" fill="#00ff00"/>
<rect x="2884" y="1106" width="90" height="2" fill="#00ff00"/>
<rect x="2972" y="1106" width="2" height="32" fill="#00ff00"/>
<rect x="2972" y="1136" width="192" height="2" fill="#008000"/>
<rect x="3162" y="1106" width="2" height="32" fill="#00ff00"/>
<rect x="3162" y="1106" width="92" height="2" fill="#00ff00"/>
<rect x="3252" y="1106" width="2" height="32" fill="#00ff00"/>
<rect x="3252" y="1136" width="472" height="2" fill="#008000"/>
<rect x="3722" y="1106" width="2" height="32" fill="#00ff00"/>
<rect x="3722" y="1106" width="86" height="2" fill="#00ff00"/>
<rect x="1378" y="1106" width="4" height="32" fill="#00d400"/>
<rect x="766" y="1148" width="2" height="32" fill="#00ff00"/>
<rect x="766" y="1178" width="722" height="2" fill="#008000"/>
<rect x="1486" y="1148" width="2" height="32" fill="#00ff00"/>
<rect x="1486" y="1148" width="90" height="2" fill="#00ff00"/>
<rect x="1574" y="1148" width="2" height="32" fill="#00ff00"/>
<rect x="1574" y="1178" width="752" height="2" fill="#008000"/>
<rect x="2324" y="1148" width="2" height="32" fill="#00ff00"/>
<rect x="2324" y="1148" width="92" height="2" fill="#00ff00"/>
<rect x="2414" y="1148" width="2" height="32" fill="#00ff00"/>
<rect x="2414" y="1178" width="192" height="2" fill="#008000"/>
<rect x="2604" y="1148" width="2" height="32" fill="#00ff00"/>
<rect x="2604" y="1148" width="90" height="2" fill="#00ff00"/>
<rect x="2692" y="1148" width="2" height="32" fill="#00ff00"/>
<rect x="2692" y="1178" width="752" height="2" fill="#008000"/>
<rect x="3442" y="1148" width="2" height="32" fill="#00ff00"/>
<rect x="3442" y="1148" width="90" height="2" fill="#00ff00"/>
<rect x="3530" y="1148" width="2" height="32" fill="#00ff00"/>
<rect x="3530" y="1178" width="278" height="2" fill="#008000"/>
<rect x="766" y="1190" width="2" height="32" fill="#00ff00"/>
<rect x="766" y="1220" width="722" height="2" fill="#008000"/>
<rect x="1486" y="1190" width="2" height="32" fill="#00ff00"/>
<rect x="1486" y="1190" width="90" height="2" fill="#00ff00"/>
<rect x="1574" y="1190" width="2" height="32" fill="#00ff00"/>
<rect x="1574" y="1220" width="752" height="2" fill="#008000"/>
<rect x="2324" y="1190" width="2" height="32" fill="#00ff00"/>
<rect x="2324" y="1190" width="92" height="2" fill="#00ff00"/>
<rect x="2414" y="1190" width="2" height="32" fill="#00ff00"/>
<rect x="2414" y="1220" width="192" height="2" fill="#008000"/>
<rect x="2604" y="1190" width="2" height="32" fill="#00ff00"/>
<rect x="2604" y="1190" width="90" height="2" fill="#00ff00"/>
<rect x="2692" y="1190" width="2" height="32" fill="#00ff00"/>
<rect x="2692" y="1220" width="752" height="2" fill="#008000"/>
<rect x="3442" y="1190" width="2" height="32" fill="#00ff00"/>
<rect x="3442" y="1190" width="90" height="2" fill="#00ff00"/>
<rect x="3530" y="1190" width="2" height="32" fill="#00ff00"/>
<rect x="3530" y="1220" width="278" height="2" fill="#008000"/>
<rect x="766" y="1232" width="2" height="32" fill="#00ff00"/>
<rect x="766" y="1262" width="66" height="2" fill="#008000"/>
<rect x="830" y="1232" width="2" height="32" fill="#00ff00"/>
<rect x="830" y="1232" width="166" height="2" fill="#00ff00"/>
<rect x="994" y="1232" width="2" height="32" fill="#00ff00"/>
<rect x="994" y="1262" width="280" height="2" fill="#008000"/>
<rect x="1272" y="1232" width="2" height="32" fill="#00ff00"/>
<rect x="1272" y="1232" width="142" height="2" fill="#00ff00"/>
<rect x="1412" y="1232" width="2" height="32" fill="#00ff00"/>
<rect x="1412" y="1262" width="145" height="2" fill="#008000"/>
<rect x="1555" y="1232" width="2" height="32" fill="#00ff00"/>
<rect x="1555" y="1232" width="139" height="2" fill="#00ff00"/>
<rect x="1692" y="1232" width="2" height="32" fill="#00ff00"/>
<rect x="1692" y="1262" width="420" height="2" fill="#008000"/>
<rect x="2110" y="1232" width="2" height="32" fill="#00ff00"/>
<rect x="2110" y="1232" width="142" height="2" fill="#00ff00"/>
<rect x="2250" y="1232" width="2" height="32" fill="#00ff00"/>
<rect x="2250" y="1262" width="142" height="2" fill="#008000"/>
<rect x="2390" y="1232" width="2" height="32" fill="#00ff00"/>
<rect x="2390" y="1232" width="142" height="2" fill="#00ff00"/>
<rect x="2530" y="1232" width="2" height="32" fill="#00ff00"/>
<rect x="2530" y="1262" width="142" height="2" fill="#008000"/>
<rect x="2670" y="1232" width="2" height="32" fill="#00ff00"/>
<rect x="2670" y="1232" width="142" height="2" fill="#00ff00"/>
<rect x="2810" y="1232" width="2" height="32" fill="#00ff00"/>
<rect x="2810" y="1262" width="142" height="2" fill="#008000"/>
<rect x="2950" y="1232" width="2" height="32" fill="#00ff00"/>
<rect x="2950" y="1232" width="140" height="2" fill="#00ff00"/>
<rect x="3088" y="1232" width="2" height="32" fill="#00ff00"/>
<rect x="3088" y="1262" width="142" height="2" fill="#008000"/>
<rect x="3228" y="1232" width="2" height="32" fill="#00ff00"/>
<rect x="3228" y="1232" width="142" height="2" fill="#00ff00"/>
<rect x="3368" y="1232" width="2" height="32" fill="#00ff00"/>
<rect x="3368" y="1262" width="142" height="2" fill="#008000"/>
<rect x="3508" y="1232" width="2" height="32" fill="#00ff00"/>
<rect x="3508" y="1232" width="142" height="2" fill="#00ff00"/>
<rect x="3648" y="1232" width="2" height="32" fill="#00ff00"/>
<rect x="3648" y="1262" width="142" height="2" fill="#008000"/>
<rect x="3788" y="1232" width="2" height="32" fill="#00ff00"/>
<rect x="3788" y="1232" width="20" height="2" fill="#00ff00"/>
<rect x="824" y="1232" width="4" height="32" fill="#00d400"/>
<rect x="1552" y="1232" width="5" height="32" fill="#00d400"/>
<rect x="1831" y="1232" width="4" height="32" fill="#00d400"/>
<rect x="1971" y="1232" width="2" height="32" fill="#00ff00"/>
<rect x="2393" y="1232" width="2" height="32" fill="#00ff00"/>
<rect x="2670" y="1232" width="4" height="32" fill="#00d400"/>
<rect x="3508" y="1232" width="4" height="32" fill="#00d400"/>
<rect x="766" y="1274" width="2" height="32" fill="#00ff00"/>
<rect x="766" y="1304" width="3042" height="2" fill="#008000"/>
<rect x="766" y="1316" width="2" height="32" fill="#00ff00"/>
<rect x="766" y="1346" width="96" height="2" fill="#008000"/>
<rect x="860" y="1316" width="2" height="32" fill="#00ff00"/>
<rect x="860" y="1316" width="10" height="2" fill="#00ff00"/>
<rect x="868" y="1316" width="2" height="32" fill="#00ff00"/>
<rect x="868" y="1346" width="134" height="2" fill="#008000"/>
<rect x="1000" y="1316" width="2" height="32" fill="#00ff00"/>
<rect x="1000" y="1316" width="10" height="2" fill="#00ff00"/>
<rect x="1008" y="1316" width="2" height="32" fill="#00ff00"/>
<rect x="1008" y="1346" width="132" height="2" fill="#008000"/>
<rect x="1138" y="1316" width="2" height="32" fill="#00ff00"/>
<rect x="1138" y="1316" width="10" height="2" fill="#00ff00"/>
<rect x="1146" y="1316" width="2" height="32" fill="#00ff00"/>
<rect x="1146" y="1346" width="134" height="2" fill="#008000"/>
<rect x="1278" y="1316" width="2" height="32" fill="#00ff00"/>
<rect x="1278" y="1316" width="10" height="2" fill="#00ff00"/>
<rect x="1286" y="1316" width="2" height="32" fill="#00ff00"/>
<rect x="1286" y="1346" width="134" height="2" fill="#008000"/>
<rect x="1418" y="1316" width="2" height="32" fill="#00ff00"/>
<rect x="1418" y="1316" width="10" height="2" fill="#00ff00"/>
<rect x="1426" y="1316" width="2" height="32" fill="#00ff00"/>
<rect x="1426" y="1346" width="134" height="2" fill="#008000"/>
<rect x="1558" y="1316" width="2" height="32" fill="#00ff00"/>
<rect x="1558" y="1316" width="10" height="2" fill="#00ff00"/>
<rect x="1566" y="1316" width="2" height="32" fill="#00ff00"/>
<rect x="1566" y="1346" width="134" height="2" fill="#008000"/>
<rect x="1698" y="1316" width="2" height="32" fill="#00ff00"/>
<rect x="1698" y="1316" width="10" height="2" fill="#00ff00"/>
<rect x="1706" y="1316" width="2" height="32" fill="#00ff00"/>
<rect x="1706" y="1346" width="134" height="2" fill="#008000"/>
<rect x="1838" y="1316" width="2" height="32" fill="#00ff00"/>
<rect x="1838" y="1316" width="10" height="2" fill="#00ff00"/>
<rect x="1846" y="1316" width="2" height="32" fill="#00ff00"/>
<rect x="1846" y="1346" width="134" height="2" fill="#008000"/>
<rect x="1978" y="1316" width="2" height="32" fill="#00ff00"/>
<rect x="1978" y="1316" width="10" height="2" fill="#00ff00"/>
<rect x="1986" y="1316" width="2" height="32" fill="#00ff00"/>
<rect x="1986" y="1346" width="132" height="2" fill="#008000"/>
<rect x="2116" y="1316" width="2" height="32" fill="#00ff00"/>
<rect x="2116" y="1316" width="10" height="2" fill="#00ff00"/>
<rect x="2124" y="1316" width="2" height="32" fill="#00ff00"/>
<rect x="2124" y="1346" width="134" height="2" fill="#008000"/>
<rect x="2256" y="1316" width="2" height="32" fill="#00ff00"/>
<rect x="2256" y="1316" width="10" height="2" fill="#00ff00"/>
<rect x="2264" y="1316" width="2" height="32" fill="#00ff00"/>
<rect x="2264" y="1346" width="134" height="2" fill="#008000"/>
<rect x="2396" y="1316" width="2" height="32" fill="#00ff00"/>
<rect x="2396" y="1316" width="10" height="2" fill="#00ff00"/>
<rect x="2404" y="1316" width="2" height="32" fill="#00ff00"/>
<rect x="2404" y="1346" width="134" height="2" fill="#008000"/>
<rect x="2536" y="1316" width="2" height="32" fill="#00ff00"/>
<rect x="2536" y="1316" width="10" height="2" fill="#00ff00"/>
<rect x="2544" y="1316" width="2" height="32" fill="#00ff00"/>
<rect x="2544" y="1346" width="134" height="2" fill="#008000"/>
<rect x="2676" y="1316" width="2" height="32" fill="#00ff00"/>
<rect x="2676" y="1316" width="10" height="2" fill="#00ff00"/>
<rect x="2684" y="1316" width="2" height="32" fill="#00ff00"/>
<rect x="2684" y="1346" width="134" height="2" fill="#008000"/>
<rect x="2816" y="1316" width="2" height="32" fill="#00ff00"/>
<rect x="2816" y="1316" width="10" height="2" fill="#00ff00"/>
<rect x="2824" y="1316" width="2" height="32" fill="#00ff00"/>
<rect x="2824" y="1346" width="134" height="2" fill="#008000"/>
<rect x="2956" y="1316" width="2" height="32" fill="#00ff00"/>
<rect x="2956" y="1316" width="10" height="2" fill="#00ff00"/>
<rect x="2964" y="1316" width="2" height="32" fill="#00ff00"/>
<rect x="2964" y="1346" width="132" height="2" fill="#008000"/>
<rect x="3094" y="1316" width="2" height="32" fill="#00ff00"/>
<rect x="3094" y="1316" width="10" height="2" fill="#00ff00"/>
<rect x="3102" y="1316" width="2" height="32" fill="#00ff00"/>
<rect x="3102" y="1346" width="134" height="2" fill="#008000"/>
<rect x="3234" y="1316" width="2" height="32" fill="#00ff00"/>
<rect x="3234" y="1316" width="10" height="2" fill="#00ff00"/>
<rect x="3242" y="1316" width="2" height="32" fill="#00ff00"/>
<rect x="3242" y="1346" width="134" height="2" fill="#008000"/>
<rect x="3374" y="1316" width="2" height="32" fill="#00ff00"/>
<rect x="3374" y="1316" width="10" height="2" fill="#00ff00"/>
<rect x="3382" y="1316" width="2" height="32" fill="#00ff00"/>
<rect x="3382" y="1346" width="134" height="2" fill="#008000"/>
<rect x="3514" y="1316" width="2" height="32" fill="#00ff00"/>
<rect x="3514" y="1316" width="10" height="2" fill="#00ff00"/>
<rect x="3522" y="1316" width="2" height="32" fill="#00ff00"/>
<rect x="3522" y="1346" width="134" height="2" fill="#008000"/>
<rect x="3654" y="1316" width="2" height="32" fill="#00ff00"/>
<rect x="3654" y="1316" width="10" height="2" fill="#00ff00"/>
<rect x="3662" y="1316" width="2" height="32" fill="#00ff00"/>
<rect x="3662" y="1346" width="134" height="2" fill="#008000"/>
<rect x="3794" y="1316" width="2" height="32" fill="#00ff00"/>
<rect x="3794" y="1316" width="10" height="2" fill="#00ff00"/>
<rect x="3802" y="1316" width="2" height="32" fill="#00ff00"/>
<rect x="3802" y="1346" width="6" height="2" fill="#008000"/>
<rect x="766" y="1358" width="2" height="32" fill="#00ff00"/>
<rect x="766" y="1388" width="166" height="2" fill="#008000"/>
<rect x="930" y="1358" width="2" height="32" fill="#00ff00"/>
<rect x="930" y="1358" width="10" height="2" fill="#00ff00"/>
<rect x="938" y="1358" width="2" height="32" fill="#00ff00"/>
<rect x="938" y="1388" width="134" height="2" fill="#008000"/>
<rect x="1070" y="1358" width="2" height="32" fill="#00ff00"/>
<rect x="1070" y="1358" width="10" height="2" fill="#00ff00"/>
<rect x="1078" y="1358" width="2" height="32" fill="#00ff00"/>
<rect x="1078" y="1388" width="132" height="2" fill="#008000"/>
<rect x="1208" y="1358" width="2" height="32" fill="#00ff00"/>
<rect x="1208" y="1358" width="10" height="2" fill="#00ff00"/>
<rect x="1216" y="1358" width="2" height="32" fill="#00ff00"/>
<rect x="1216" y="1388" width="134" height="2" fill="#008000"/>
<rect x="1348" y="1358" width="2" height="32" fill="#00ff00"/>
<rect x="1348" y="1358" width="10" height="2" fill="#00ff00"/>
<rect x="1356" y="1358" width="2" height="32" fill="#00ff00"/>
<rect x="1356" y="1388" width="134" height="2" fill="#008000"/>
<rect x="1488" y="1358" width="2" height="32" fill="#00ff00"/>
<rect x="1488" y="1358" width="10" height="2" fill="#00ff00"/>
<rect x="1496" y="1358" width="2" height="32" fill="#00ff00"/>
<rect x="1496" y="1388" width="134" height="2" fill="#008000"/>
<rect x="1628" y="1358" width="2" height="32" fill="#00ff00"/>
<rect x="1628" y="1358" width="10" height="2" fill="#00ff00"/>
<rect x="1636" y="1358" width="2" height="32" fill="#00ff00"/>
<rect x="1636" y="1388" width="134" height="2" fill="#008000"/>
<rect x="1768" y="1358" width="2" height="32" fill="#00ff00"/>
<rect x="1768" y="1358" width="10" height="2" fill="#00ff00"/>
<rect x="1776" y="1358" width="2" height="32" fill="#00ff00"/>
<rect x="1776" y="1388" width="134" height="2" fill="#008000"/>
<rect x="1908" y="1358" width="2" height="32" fill="#00ff00"/>
<rect x="1908" y="1358" width="10" height="2" fill="#00ff00"/>
<rect x="1916" y="1358" width="2" height="32" fill="#00ff00"/>
<rect x="1916" y="1388" width="132" height="2" fill="#008000"/>
<rect x="2046" y="1358" width="2" height="32" fill="#00ff00"/>
<rect x="2046" y="1358" width="10" height="2" fill="#00ff00"/>
<rect x="2054" y="1358" width="2" height="32" fill="#00ff00"/>
<rect x="2054" y="1388" width="134" height="2" fill="#008000"/>
<rect x="2186" y="1358" width="2" height="32" fill="#00ff00"/>
<rect x="2186" y="1358" width="10" height="2" fill="#00ff00"/>
<rect x="2194" y="1358" width="2" height="32" fill="#00ff00"/>
<rect x="2194" y="1388" width="134" height="2" fill="#008000"/>
<rect x="2326" y="1358" width="2" height="32" fill="#00ff00"/>
<rect x="2326" y="1358" width="10" height="2" fill="#00ff00"/>
<rect x="2334" y="1358" width="2" height="32" fill="#00ff00"/>
<rect x="2334" y="1388" width="134" height="2" fill="#008000"/>
<rect x="2466" y="1358" width="2" height="32" fill="#00ff00"/>
<rect x="2466" y="1358" width="10" height="2" fill="#00ff00"/>
<rect x="2474" y="1358" width="2" height="32" fill="#00ff00"/>
<rect x="2474" y="1388" width="134" height="2" fill="#008000"/>
<rect x="2606" y="1358" width="2" height="32" fill="#00ff00"/>
<rect x="2606" y="1358" width="10" height="2" fill="#00ff00"/>
<rect x="2614" y="1358" width="2" height="32" fill="#00ff00"/>
<rect x="2614" y="1388" width="134" height="2" fill="#008000"/>
<rect x="2746" y="1358" width="2" height="32" fill="#00ff00"/>
<rect x="2746" y="1358" width="10" height="2" fill="#00ff00"/>
<rect x="2754" y="1358" width="2" height="32" fill="#00ff00"/>
<rect x="2754" y="1388" width="134" height="2" fill="#008000"/>
<rect x="2886" y="1358" width="2" height="32" fill="#00ff00"/>
<rect x="2886" y="1358" width="10" height="2" fill="#00ff00"/>
<rect x="2894" y="1358" width="2" height="32" fill="#00ff00"/>
<rect x="2894" y="1388" width="132" height="2" fill="#008000"/>
<rect x="3024" y="1358" width="2" height="32" fill="#00ff00"/>
<rect x="3024" y="1358" width="10" height="2" fill="#00ff00"/>
<rect x="3032" y="1358" width="2" height="32" fill="#00ff00"/>
<rect x="3032" y="1388" width="134" height="2" fill="#008000"/>
<rect x="3164" y="1358" width="2" height="32" fill="#00ff00"/>
<rect x="3164" y="1358" width="10" height="2" fill="#00ff00"/>
<rect x="3172" y="1358" width="2" height="32" fill="#00ff00"/>
<rect x="3172" y="1388" width="134" height="2" fill="#008000"/>
<rect x="3304" y="1358" width="2" height="32" fill="#00ff00"/>
<rect x="3304" y="1358" width="10" height="2" fill="#00ff00"/>
<rect x="3312" y="1358" width="2" height="32" fill="#00ff00"/>
<rect x="3312" y="1388" width="134" height="2" fill="#008000"/>
<rect x="3444" y="1358" width="2" height="32" fill="#00ff00"/>
<rect x="3444" y="1358" width="10" height="2" fill="#00ff00"/>
<rect x="3452" y="1358" width="2" height="32" fill="#00ff00"/>
<rect x="3452" y="1388" width="134" height="2" fill="#008000"/>
<rect x="3584" y="1358" width="2" height="32" fill="#00ff00"/>
<rect x="3584" y="1358" width="10" height="2" fill="#00ff00"/>
<rect x="3592" y="1358" width="2" height="32" fill="#00ff00"/>
<rect x="3592" y="1388" width="134" height="2" fill="#008000"/>
<rect x="3724" y="1358" width="2" height="32" fill="#00ff00"/>
<rect x="3724" y="1358" width="10" height="2" fill="#00ff00"/>
<rect x="3732" y="1358" width="2" height="32" fill="#00ff00"/>
<rect x="3732" y="1388" width="76" height="2" fill="#008000"/>
<rect x="766" y="1400" width="2" height="32" fill="#00ff00"/>
<rect x="766" y="1430" width="3042" height="2" fill="#008000"/>
<rect x="824" y="1400" width="4" height="32" fill="#00d400"/>
<rect x="766" y="1442" width="2" height="32" fill="#00ff00"/>
<rect x="766" y="1472" width="3042" height="2" fill="#008000"/>
<rect x="826" y="1442" width="2" height="32" fill="#00ff00"/>
<rect x="766" y="1484" width="2" height="32" fill="#00ff00"/>
<rect x="766" y="1514" width="3042" height="2" fill="#008000"/>
<rect x="826" y="1484" width="2" height="32" fill="#00ff00"/>
<rect x="766" y="1526" width="2" height="32" fill="#00ff00"/>
<rect x="766" y="1556" width="3042" height="2" fill="#008000"/>
<rect x="826" y="1526" width="2" height="32" fill="#00ff00"/>
<rect x="766" y="1568" width="2" height="32" fill="#00ff00"/>
<rect x="766" y="1598" width="3042" height="2" fill="#008000"/>
<rect x="826" y="1568" width="2" height="32" fill="#00ff00"/>
<rect x="766" y="1610" width="2" height="32" fill="#00ff00"/>
<rect x="766" y="1640" width="3042" height="2" fill="#008000"/>
<rect x="826" y="1610" width="2" height="32" fill="#00ff00"/>
<rect x="766" y="1652" width="2" height="32" fill="#00ff00"/>
<rect x="766" y="1682" width="3042" height="2" fill="#008000"/>
<rect x="826" y="1652" width="2" height="32" fill="#00ff00"/>
<rect x="766" y="1694" width="2" height="32" fill="#00ff00"/>
<rect x="766" y="1724" width="3042" height="2" fill="#008000"/>
<rect x="826" y="1694" width="2" height="32" fill="#00ff00"/>
</g>
<path d="M770,183 L768,197 L770,213 M768,197 L826,197 M822.5,183 L826,197 L822.5,213 M848.4,197 L844.9,183 L829.5,183 L826,197 L829.5,213 L844.9,213 Z M1001,197 L997.5,183 L851.9,183 L848.4,197 L851.9,213 L997.5,213 Z M1137.8,197 L1134.3,183 L1004.5,183 L1001,197 L1004.5,213 L1134.3,213 Z M1278,197 L1274.5,183 L1144.1,183 L1140.6,197 L1144.1,213 L1274.5,213 Z M1558,197 L1554.5,183 L1281.5,183 L1278,197 L1281.5,213 L1554.5,213 Z M1835.5,197 L1832.0,183 L1561.5,183 L1558,197 L1561.5,213 L1832.0,213 Z M1975,197 L1971.5,183 L1841.8,183 L1838.3,197 L1841.8,213 L1971.5,213 Z M2116,197 L2112.5,183 L1981.9,183 L1978.4,197 L1981.9,213 L2112.5,213 Z M2396,197 L2392.5,183 L2119.5,183 L2116,197 L2119.5,213 L2392.5,213 Z M2676,197 L2672.5,183 L2399.5,183 L2396,197 L2399.5,213 L2672.5,213 Z M2953,197 L2949.5,183 L2679.5,183 L2676,197 L2679.5,213 L2949.5,213 Z M3234,197 L3230.5,183 L2960.0,183 L2956.5,197 L2960.0,213 L3230.5,213 Z M3514,197 L3510.5,183 L3237.5,183 L3234,197 L3237.5,213 L3510.5,213 Z M3791,197 L3787.5,183 L3517.5,183 L3514,197 L3517.5,213 L3787.5,213 Z M3826,197 L3822.5,183 L3798.1,183 L3794.6,197 L3798.1,213 L3822.5,213 Z" fill="none" stroke="#0000ff" stroke-width="2" stroke-linejoin="miter"/>
<text x="829.5" y="206" text-anchor="start" font-family='"Liberation Mono", monospace' font-size="22" letter-spacing="-1.1" fill="#ffffff" xml:space="preserve">+</text>
<text x="851.9" y="206" text-anchor="start" font-family='"Liberation Mono", monospace' font-size="22" letter-spacing="-1.1" fill="#ffffff" xml:space="preserve">GOJAM</text>
<text x="1004.5" y="206" text-anchor="start" font-family='"Liberation Mono", monospace' font-size="22" letter-spacing="-1.1" fill="#ffffff" xml:space="preserve">TC 4000</text>
<text x="1144.1" y="206" text-anchor="start" font-family='"Liberation Mono", monospace' font-size="22" letter-spacing="-1.1" fill="#ffffff" xml:space="preserve">INHINT</text>
<text x="1281.5" y="206" text-anchor="start" font-family='"Liberation Mono", monospace' font-size="22" letter-spacing="-1.1" fill="#ffffff" xml:space="preserve">CA 7613</text>
<text x="1561.5" y="206" text-anchor="start" font-family='"Liberation Mono", monospace' font-size="22" letter-spacing="-1.1" fill="#ffffff" xml:space="preserve">TS 0026</text>
<text x="1841.8" y="206" text-anchor="start" font-family='"Liberation Mono", monospace' font-size="22" letter-spacing="-1.1" fill="#ffffff" xml:space="preserve">TCF 4054</text>
<text x="1981.9" y="206" text-anchor="start" font-family='"Liberation Mono", monospace' font-size="22" letter-spacing="-1.1" fill="#ffffff" xml:space="preserve">RELINT</text>
<text x="2119.5" y="206" text-anchor="start" font-family='"Liberation Mono", monospace' font-size="22" letter-spacing="-1.1" fill="#ffffff" xml:space="preserve">CA 0007</text>
<text x="2399.5" y="206" text-anchor="start" font-family='"Liberation Mono", monospace' font-size="22" letter-spacing="-1.1" fill="#ffffff" xml:space="preserve">TS 0061</text>
<text x="2679.5" y="206" text-anchor="start" font-family='"Liberation Mono", monospace' font-size="22" letter-spacing="-1.1" fill="#ffffff" xml:space="preserve">TS 0062</text>
<text x="2960.0" y="206" text-anchor="start" font-family='"Liberation Mono", monospace' font-size="22" letter-spacing="-1.1" fill="#ffffff" xml:space="preserve">INCR 0061</text>
<text x="3237.5" y="206" text-anchor="start" font-family='"Liberation Mono", monospace' font-size="22" letter-spacing="-1.1" fill="#ffffff" xml:space="preserve">CA 0005</text>
<text x="3517.5" y="206" text-anchor="start" font-family='"Liberation Mono", monospace' font-size="22" letter-spacing="-1.1" fill="#ffffff" xml:space="preserve">TS 0001</text>
<text x="3798.1" y="206" text-anchor="start" font-family='"Liberation Mono", monospace' font-size="22" letter-spacing="-1.1" fill="#ffffff" xml:space="preserve">CA 0001</text>
<rect x="1138" y="176" width="2" height="1564" fill="#ff8080"/>
</g>
</svg></body></html>
